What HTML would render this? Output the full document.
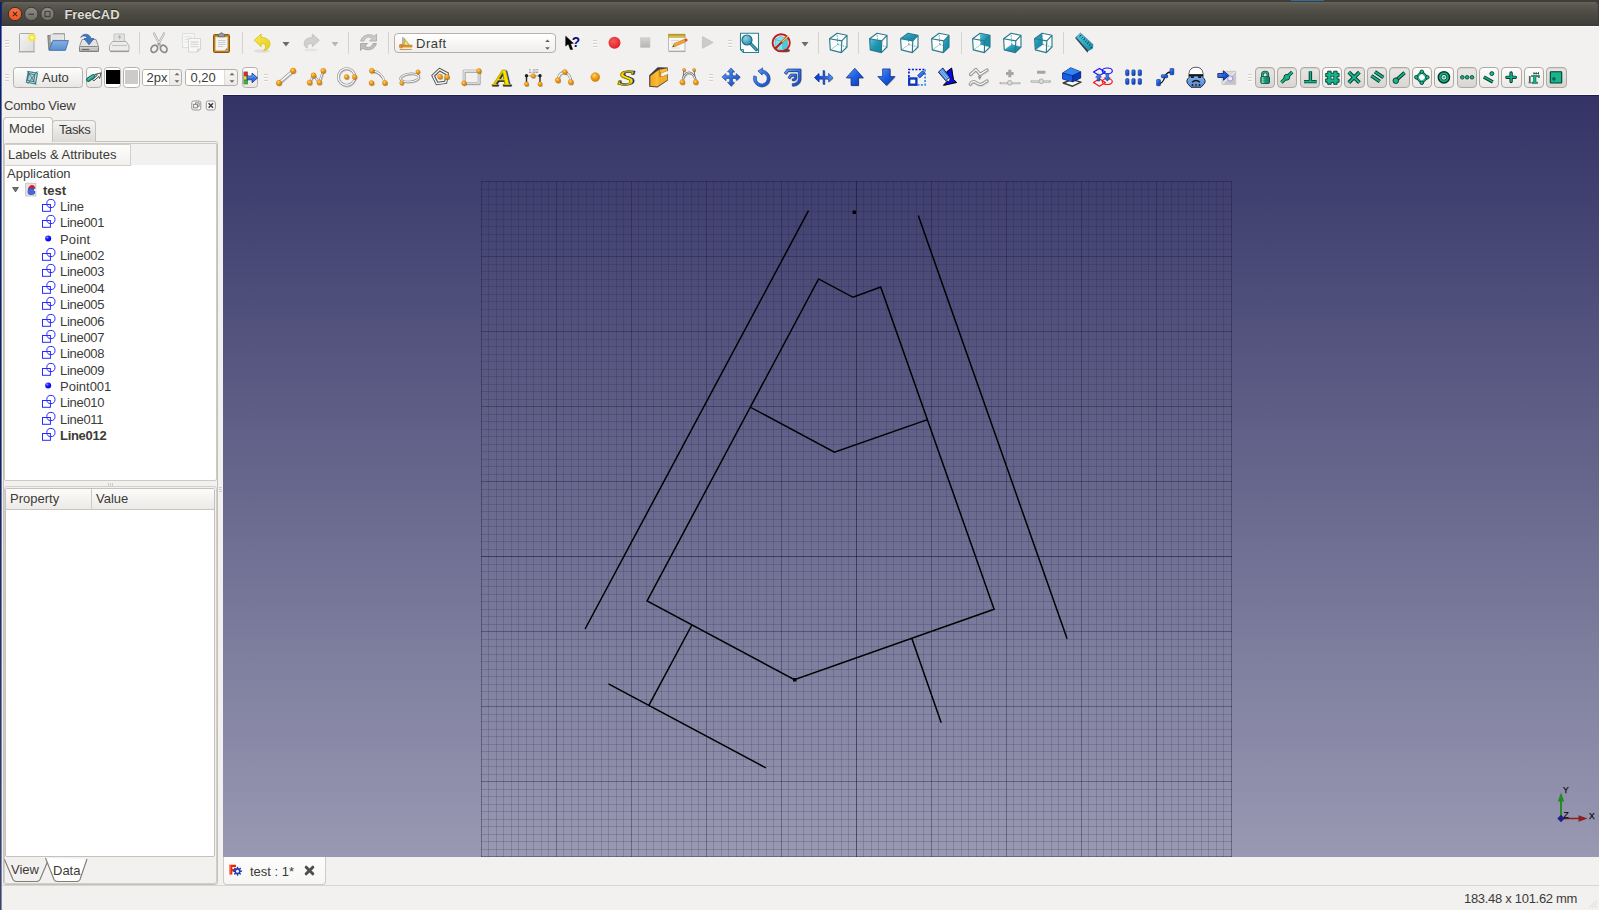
<!DOCTYPE html>
<html><head><meta charset="utf-8"><title>FreeCAD</title>
<style>
*{box-sizing:border-box}
html,body{margin:0;padding:0}
body{width:1599px;height:910px;overflow:hidden;position:relative;background:#f2f1f0;font-family:"Liberation Sans","DejaVu Sans",sans-serif;font-size:13px;color:#3c3b37}
.abs{position:absolute}
.t{position:absolute;white-space:nowrap;line-height:16px;height:16px;margin-top:1px}
svg{position:absolute;overflow:visible}
.btn{position:absolute;border:1px solid #b5b1aa;border-radius:3.500px;background:linear-gradient(#fdfdfd,#f3f2f1 50%,#e9e7e5)}
.sbtn{position:absolute;border:1px solid #aeaaa3;border-radius:4px;background:linear-gradient(#e9e7e4,#d9d6d2);box-shadow:inset 0 1px 1px rgba(0,0,0,.08)}
.sbtn.up{background:linear-gradient(#fdfdfc,#ebe9e6);box-shadow:none}
.spin{position:absolute;border:1px solid #b5b1aa;border-radius:3px;background:#fff}
.sep{position:absolute;width:1px;background:#d6d3cf}
.hd{position:absolute;width:4px;height:1px;background:#d3d0cb;box-shadow:0 1px 0 #fbfbfa}
</style></head><body>

<div class="abs" style="left:0;top:0;width:1599px;height:26px;background:#3e3d39"></div>
<div class="abs" style="left:1.500px;top:2px;width:1596.500px;height:24px;border-radius:4px 4px 0 0;background:linear-gradient(#67655b,#5a584f 12%,#4b4a43 50%,#42413c 88%,#3a3935)"></div>
<div class="abs" style="left:2px;top:26px;width:1597px;height:1px;background:#fbfbfa"></div>
<div class="abs" style="left:0;top:2px;width:1px;height:908px;background:linear-gradient(#0b1c78,#0c2468 20%,#10245f 50%,#3c4570)"></div><div class="abs" style="left:1px;top:2px;width:1px;height:908px;opacity:.6;background:linear-gradient(#0b1c78,#0c2468 20%,#10245f 50%,#3c4570)"></div>
<div class="abs" style="left:1291px;top:0;width:33px;height:1px;background:#2a7fc0;opacity:.75"></div>
<svg style="left:6px;top:5.300px" width="52" height="18" viewBox="0 0 52 18"><defs><radialGradient id="gc" cx=".5" cy=".3" r=".7"><stop offset="0" stop-color="#f5774a"/><stop offset="1" stop-color="#ea5424"/></radialGradient><linearGradient id="gg" x1="0" y1="0" x2="0" y2="1"><stop offset="0" stop-color="#8f8d86"/><stop offset="1" stop-color="#6d6b65"/></linearGradient></defs><circle cx="9" cy="9" r="6.700" fill="url(#gc)" stroke="#3a3028" stroke-width="1"/><path d="M6.900 6.900l4.200 4.200M11.100 6.900l-4.200 4.200" stroke="#5a2410" stroke-width="1.300" fill="none"/><circle cx="25.300" cy="9" r="6.700" fill="url(#gg)" stroke="#383733" stroke-width="1"/><path d="M22.600 9.300h5.400" stroke="#45443f" stroke-width="1.400"/><circle cx="41.500" cy="9" r="6.700" fill="url(#gg)" stroke="#383733" stroke-width="1"/><rect x="39" y="6.500" width="5" height="5" fill="none" stroke="#45443f" stroke-width="1.200"/></svg>
<div class="t" style="left:64.500px;top:6px;font-weight:bold;font-size:13px;color:#dfdbd2;letter-spacing:-.1px;text-shadow:0 -1px 0 rgba(0,0,0,.5)">FreeCAD</div>
<div class="abs" style="left:2px;top:27px;width:1597px;height:68px;background:#f2f1f0"></div>
<div class="hd" style="left:5px;top:40px"></div>
<div class="hd" style="left:5px;top:43px"></div>
<div class="hd" style="left:5px;top:46px"></div>
<svg style="left:15px;top:31px" width="24" height="24" viewBox="0 0 24 24"><defs><linearGradient id="nw" x1="0" y1="0" x2="1" y2="1"><stop offset="0" stop-color="#f4f4f3"/><stop offset="1" stop-color="#dcdcdb"/></linearGradient><radialGradient id="ny"><stop offset="0" stop-color="#fffde0"/><stop offset=".35" stop-color="#f5ee3c"/><stop offset="1" stop-color="#f0e62c" stop-opacity=".0"/></radialGradient></defs><rect x="3.500" y="20" width="16.500" height="1.500" fill="#9a9a98" opacity=".7"/><rect x="4.500" y="2.500" width="14.500" height="18" rx=".8" fill="url(#nw)" stroke="#a9a9a7"/><circle cx="17" cy="6.500" r="5" fill="url(#ny)"/><circle cx="17" cy="6.500" r="3.300" fill="#f2ea3a" opacity=".85"/><circle cx="17" cy="6.500" r="1.200" fill="#fffef0"/></svg>
<svg style="left:46px;top:31px" width="24" height="24" viewBox="0 0 24 24"><defs><linearGradient id="ob" x1="0" y1="0" x2="0" y2="1"><stop offset="0" stop-color="#86b0e0"/><stop offset="1" stop-color="#5a8fd0"/></linearGradient></defs><path d="M1.800 4.500h4.500l1-1.700h11.200v16H2.800z" fill="#9a9a97" stroke="#70706d" stroke-width=".8" stroke-linejoin="round"/><path d="M4.800 3.300h13.400v8H4.800z" fill="#f4f4f3" stroke="#bdbdba" stroke-width=".6"/><path d="M6 5h11M6 6.800h11M6 8.600h11" stroke="#cfcfcc" stroke-width=".8"/><path d="M6.800 9.600H22.400L19.500 19.300H3.200z" fill="url(#ob)" stroke="#3d6fb3" stroke-width=".9" stroke-linejoin="round"/></svg>
<svg style="left:77px;top:31px" width="24" height="24" viewBox="0 0 24 24"><defs><linearGradient id="sv" x1="0" y1="0" x2="0" y2="1"><stop offset="0" stop-color="#d9d9d7"/><stop offset="1" stop-color="#a5a5a2"/></linearGradient></defs><path d="M5 8.500H19L21.500 15.500V20.500H2.500V15.500z" fill="#e4e4e2" stroke="#8a8a87" stroke-width=".9" stroke-linejoin="round"/><rect x="2.500" y="15.500" width="19" height="5" rx="1" fill="url(#sv)" stroke="#7d7d7a" stroke-width=".9"/><path d="M5 18.500h7" stroke="#6a6a67" stroke-width="1.200"/><path d="M14 18.500h5.500" stroke="#c9c9c6" stroke-width="1"/><path d="M3.700 6.500C5 2.500 12.500 1.500 14 7.500H17L12 13.800 7 7.500H10C9.500 4.500 6 4.300 3.700 6.500z" fill="#3f78bd" stroke="#2c5c9b" stroke-width=".7" stroke-linejoin="round"/></svg>
<svg style="left:107px;top:31px" width="24" height="24" viewBox="0 0 24 24"><path d="M7 3h10.500v8H7z" fill="#e3e3e1" stroke="#bdbdba" stroke-width=".8"/><path d="M12.200 8.500v-2h-1.700l2-2.300 2 2.300h-1.700v2z" fill="#a9a9a6"/><path d="M5.500 10.500h13.500l3 4v4.500q0 1-1 1h-17.500q-1 0-1-1v-4.500z" fill="#ededeb" stroke="#a6a6a3" stroke-width=".9" stroke-linejoin="round"/><path d="M5 14.500h15" stroke="#c4c4c1" stroke-width="1.200"/><path d="M3 20.500h19" stroke="#9a9a97" stroke-width="1.200"/></svg>
<div class="sep" style="left:139px;top:32px;height:22px"></div>
<svg style="left:147px;top:31px" width="24" height="24" viewBox="0 0 24 24"><path d="M7 2.500L13.300 14.500M17 2.500L10.700 14.500" stroke="#a8a8a5" stroke-width="2.200" stroke-linecap="round"/><path d="M7 2.500L13.300 14.500M17 2.500L10.700 14.500" stroke="#f3f3f2" stroke-width=".9" stroke-linecap="round"/><ellipse cx="7.300" cy="17.800" rx="3" ry="3.800" transform="rotate(35 7.300 17.800)" fill="none" stroke="#8c8c89" stroke-width="1.800"/><ellipse cx="16.700" cy="17.800" rx="3" ry="3.800" transform="rotate(-35 16.700 17.800)" fill="none" stroke="#8c8c89" stroke-width="1.800"/><circle cx="12" cy="12.800" r="1" fill="#8c8c89"/></svg>
<svg style="left:179px;top:31px" width="24" height="24" viewBox="0 0 24 24"><path d="M3.500 2.500h12v14h-12z" fill="#f6f6f5" stroke="#dcdcda" stroke-width=".9"/><path d="M5.500 6h8M5.500 8.500h8M5.500 11h8" stroke="#e3e3e1" stroke-width="1"/><path d="M9.500 7.500h12v10.500l-3 3h-9z" fill="#f7f7f6" stroke="#d2d2d0" stroke-width=".9"/><path d="M11.500 11h8M11.500 13.300h8M11.500 15.600h8" stroke="#d9d9d7" stroke-width="1.300"/><path d="M18.500 21v-3h3z" fill="#e0e0de" stroke="#c8c8c6" stroke-width=".6"/></svg>
<svg style="left:210px;top:31px" width="24" height="24" viewBox="0 0 24 24"><rect x="3.500" y="3.500" width="16" height="18" rx="1.200" fill="#c17d11" stroke="#8f5902" stroke-width="1"/><path d="M5.500 6h12v13.500h-12z" fill="#f3f3f2" stroke="#d2d2cf" stroke-width=".6"/><path d="M8 9.500h7.500M8 11.500h7.500M8 13.500h7.500M8 15.500h5" stroke="#cdcdcb" stroke-width="1.200"/><path d="M14.500 19.500l3-3v3z" fill="#8b8b88"/><path d="M8.300 5.800V4q0-1 1-1h.9q.2-1.300 1.300-1.300t1.300 1.300h.9q1 0 1 1v1.800z" fill="#9b9b98" stroke="#5f5f5c" stroke-width=".8"/></svg>
<div class="sep" style="left:242px;top:32px;height:22px"></div>
<svg style="left:250px;top:31px" width="24" height="24" viewBox="0 0 24 24"><defs><linearGradient id="un" x1="0" y1="0" x2="1" y2="1"><stop offset="0" stop-color="#f7ea52"/><stop offset="1" stop-color="#e4cf1c"/></linearGradient></defs><ellipse cx="12" cy="20" rx="8" ry="1.800" fill="#000" opacity=".08"/><path d="M4.200 9.300L11.200 3V6.500C17 6.500 20.500 9.500 20 13.500 19.600 16.800 17 19 13.500 19.800 16.500 17.300 16.500 12.500 11.200 12.500V15.800z" fill="url(#un)" stroke="#d6c211" stroke-width=".8" stroke-linejoin="round"/></svg>
<svg style="left:282px;top:42px" width="8" height="5" viewBox="0 0 8 5"><path d="M0.500 0h7L4 4.500z" fill="#6b6a66"/></svg>
<svg style="left:299px;top:31px" width="24" height="24" viewBox="0 0 24 24"><ellipse cx="12" cy="19" rx="7" ry="1.500" fill="#000" opacity=".05"/><path d="M20.300 9.300L13.300 3V6.500C8 6.500 4.800 9.300 5.200 13 5.500 15.300 6.800 16.600 8.500 17 7.500 14.500 8.800 12.500 13.300 12.500V15.800z" fill="#cfcfcd" stroke="#bdbdba" stroke-width=".8" stroke-linejoin="round"/></svg>
<svg style="left:331px;top:42px" width="8" height="5" viewBox="0 0 8 5"><path d="M0.500 0h7L4 4.500z" fill="#b9b7b3"/></svg>
<div class="sep" style="left:348px;top:32px;height:22px"></div>
<svg style="left:356px;top:31px" width="24" height="24" viewBox="0 0 24 24"><path d="M20.500 3v7h-7l2.600-2.600C13.500 5 9 6 8 10H4.600C6 3.800 14 2 18.200 5.300z" fill="#c9c9c7" stroke="#a8a8a5" stroke-width=".8" stroke-linejoin="round"/><path d="M4.500 19.500v-7h7l-2.600 2.600C11.500 17.500 16 16.500 17 12.500h3.400C19 18.700 11 20.500 6.800 17.200z" fill="#bdbdbb" stroke="#a1a19e" stroke-width=".8" stroke-linejoin="round"/></svg>
<div class="sep" style="left:388px;top:32px;height:22px"></div>
<div class="btn" style="left:394px;top:32.500px;width:162px;height:20.300px;border-radius:4px;background:linear-gradient(#ffffff,#efeeec)"></div>
<svg style="left:396.500px;top:33.500px" width="19" height="19" viewBox="0 0 24 24"><path d="M7.500 4v12" stroke="#3c3b37" stroke-width=".8"/><path d="M9 5.500L16.500 15H9z" fill="#e8d44c" stroke="#a38d12" stroke-width=".8" stroke-linejoin="round"/><path d="M10.500 10v3.500h3z" fill="#f7f3c8"/><path d="M6.500 13.200H4.200q-1 0-1 1v2.300q0 1 1 1h2.300z" fill="#e9921c" stroke="#b5690b" stroke-width=".7"/><path d="M6.500 14.200H19v2.300H6.500z" fill="#f0a030" stroke="#b5690b" stroke-width=".7"/><path d="M3.500 19.500h15" stroke="#b5690b" stroke-width=".9"/></svg>
<div class="t" style="left:416px;top:35px;letter-spacing:.5px">Draft</div>
<svg style="left:544.400px;top:38px" width="7" height="13" viewBox="0 0 7 13"><path d="M1.200 4L3.500 1.600 5.800 4zM1.200 9.300L3.500 11.700 5.800 9.300z" fill="#5f5e5a"/></svg>
<svg style="left:560px;top:31px" width="24" height="24" viewBox="0 0 24 24"><path d="M5.700 5.200V15.100L8.300 12.900 10.400 18.500 12.600 18.500 10.600 12.700 13.400 12.300z" fill="#000" stroke="#000" stroke-width=".5" stroke-linejoin="round"/><text x="11.700" y="16.200" font-family="Liberation Sans, sans-serif" font-weight="bold" font-size="15.500" textLength="8.300" lengthAdjust="spacingAndGlyphs" fill="#0a0a82">?</text></svg>
<div class="hd" style="left:593px;top:40px"></div>
<div class="hd" style="left:593px;top:43px"></div>
<div class="hd" style="left:593px;top:46px"></div>
<svg style="left:602px;top:31px" width="24" height="24" viewBox="0 0 24 24"><defs><radialGradient id="rc" cx=".4" cy=".35" r=".7"><stop offset="0" stop-color="#f55a5a"/><stop offset="1" stop-color="#e01b24"/></radialGradient></defs><circle cx="12.500" cy="11.800" r="6" fill="url(#rc)"/></svg>
<svg style="left:633px;top:31px" width="24" height="24" viewBox="0 0 24 24"><defs><linearGradient id="st" x1="0" y1="0" x2="0" y2="1"><stop offset="0" stop-color="#d2d2d0"/><stop offset="1" stop-color="#b4b4b2"/></linearGradient></defs><rect x="7.300" y="6.800" width="9.700" height="9.700" fill="url(#st)" stroke="#c9c9c7" stroke-width=".6"/></svg>
<svg style="left:665px;top:31px" width="24" height="24" viewBox="0 0 24 24"><path d="M3.500 20.500h17" stroke="#a8a8a5" stroke-width="1.200"/><rect x="3.500" y="4" width="16.500" height="16" rx=".8" fill="#f7f7f6" stroke="#b3b3b0" stroke-width=".9"/><rect x="3.500" y="3.200" width="16.500" height="3" fill="#e3c24a" stroke="#b79a23" stroke-width=".7"/><path d="M5 3v2M7 3v2M9 3v2M11 3v2M13 3v2M15 3v2M17 3v2M19 3v2" stroke="#8a7412" stroke-width=".7"/><path d="M6 9.500h8M6 12h5M6 17h9" stroke="#dadad8" stroke-width="1"/><path d="M7.500 15.800L9.300 12.600 19.500 8.300 20.700 10.700 10.700 15.200z" fill="#f0a830" stroke="#b5781a" stroke-width=".6" stroke-linejoin="round"/><path d="M19.500 8.300l1.700-.7q.8-.2 1.100.6l.3.900q.2.800-.6 1.100l-1.300.5z" fill="#e04a3a"/><path d="M7.500 15.800l1-1.700 1 1.300z" fill="#3c3b37"/></svg>
<svg style="left:696px;top:31px" width="24" height="24" viewBox="0 0 24 24"><path d="M6.400 5.600L17.200 11.500 6.400 17.300z" fill="#cbcbc9" stroke="#bdbdbb" stroke-width=".7" stroke-linejoin="round"/></svg>
<div class="hd" style="left:728px;top:40px"></div>
<div class="hd" style="left:728px;top:43px"></div>
<div class="hd" style="left:728px;top:46px"></div>
<svg style="left:737px;top:31px" width="24" height="24" viewBox="0 0 24 24"><path d="M3.500 2.300H21.500V21.500H6.500L3.500 18.500z" fill="#fdfdfd" stroke="#2a7f92" stroke-width="1.100" stroke-linejoin="round"/><path d="M3.500 18.500h3v3" fill="none" stroke="#2a7f92" stroke-width=".9"/><path d="M13 12l6.400 6.600" stroke="#1f6f84" stroke-width="3.200" stroke-linecap="round"/><path d="M13.500 12.500l5.600 5.800" stroke="#4aa6bf" stroke-width="1.300" stroke-linecap="round"/><defs><radialGradient id="zf" cx=".35" cy=".3" r=".8"><stop offset="0" stop-color="#8fd6ea"/><stop offset="1" stop-color="#1f86a2"/></radialGradient></defs><circle cx="10" cy="9" r="5" fill="url(#zf)" stroke="#1f6f84" stroke-width="1.200"/></svg>
<svg style="left:769px;top:31px" width="24" height="24" viewBox="0 0 24 24"><ellipse cx="16" cy="19.500" rx="5" ry="1.800" fill="#1a1a1a" opacity=".75"/><path d="M6 8.500l4.500-3 8 1.500v9l-5 3.500-7.500-2z" fill="#7fe3ee" stroke="#3aa9b8" stroke-width=".6"/><path d="M6 8.500l7.500 2 5-3.500M13.500 10.500v9" fill="none" stroke="#3aa9b8" stroke-width=".6"/><path d="M13.500 10.500l5-3.500v9l-5 3.500z" fill="#4cc9d8"/><circle cx="12.200" cy="11.800" r="8.600" fill="none" stroke="#c21a1a" stroke-width="1.900"/><path d="M5.800 18L18.500 5.500" stroke="#c21a1a" stroke-width="1.900"/><path d="M13 11l6.500-6.300" stroke="#f2d23a" stroke-width="1.200"/></svg>
<svg style="left:801px;top:42px" width="8" height="5" viewBox="0 0 8 5"><path d="M0.500 0h7L4 4.500z" fill="#6b6a66"/></svg>
<div class="sep" style="left:818px;top:32px;height:22px"></div>
<svg style="left:826px;top:31px" width="24" height="24" viewBox="0 0 24 24"><defs><linearGradient id="cb" x1="0" y1="0" x2="1" y2="1"><stop offset="0" stop-color="#5cc4e0"/><stop offset=".5" stop-color="#1f93b0"/><stop offset="1" stop-color="#11879f"/></linearGradient></defs><path d="M3.6 7.7L11.1 2.3L21 4.3L21 16L15.3 21.6L4.3 18.9z" fill="#fbfdfd"/><path d="M11.8 13.5L11.1 2.3M11.8 13.5L4.3 18.9M11.8 13.5L21 16" stroke="#3b8797" stroke-width=".7" stroke-dasharray="1.600 1" fill="none"/><path d="M3.6 7.7L15.8 9.9L15.3 21.6L4.3 18.9zM3.6 7.7L11.1 2.3L21 4.3L15.8 9.9zM15.8 9.9L21 4.3L21 16L15.3 21.6z" fill="none" stroke="#2b7b8d" stroke-width="1.150" stroke-linejoin="round"/></svg>
<div class="sep" style="left:858px;top:32px;height:22px"></div>
<svg style="left:866px;top:31px" width="24" height="24" viewBox="0 0 24 24"><defs><linearGradient id="cb" x1="0" y1="0" x2="1" y2="1"><stop offset="0" stop-color="#5cc4e0"/><stop offset=".5" stop-color="#1f93b0"/><stop offset="1" stop-color="#11879f"/></linearGradient></defs><path d="M3.6 7.7L11.1 2.3L21 4.3L21 16L15.3 21.6L4.3 18.9z" fill="#fbfdfd"/><path d="M11.8 13.5L11.1 2.3M11.8 13.5L4.3 18.9M11.8 13.5L21 16" stroke="#3b8797" stroke-width=".7" stroke-dasharray="1.600 1" fill="none"/><path d="M3.6 7.7L15.8 9.9L15.3 21.6L4.3 18.9z" fill="url(#cb)"/><path d="M3.6 7.7L15.8 9.9L15.3 21.6L4.3 18.9zM3.6 7.7L11.1 2.3L21 4.3L15.8 9.9zM15.8 9.9L21 4.3L21 16L15.3 21.6z" fill="none" stroke="#2b7b8d" stroke-width="1.150" stroke-linejoin="round"/></svg>
<svg style="left:897px;top:31px" width="24" height="24" viewBox="0 0 24 24"><defs><linearGradient id="cb" x1="0" y1="0" x2="1" y2="1"><stop offset="0" stop-color="#5cc4e0"/><stop offset=".5" stop-color="#1f93b0"/><stop offset="1" stop-color="#11879f"/></linearGradient></defs><path d="M3.6 7.7L11.1 2.3L21 4.3L21 16L15.3 21.6L4.3 18.9z" fill="#fbfdfd"/><path d="M11.8 13.5L11.1 2.3M11.8 13.5L4.3 18.9M11.8 13.5L21 16" stroke="#3b8797" stroke-width=".7" stroke-dasharray="1.600 1" fill="none"/><path d="M3.6 7.7L11.1 2.3L21 4.3L15.8 9.9z" fill="url(#cb)"/><path d="M3.6 7.7L15.8 9.9L15.3 21.6L4.3 18.9zM3.6 7.7L11.1 2.3L21 4.3L15.8 9.9zM15.8 9.9L21 4.3L21 16L15.3 21.6z" fill="none" stroke="#2b7b8d" stroke-width="1.150" stroke-linejoin="round"/></svg>
<svg style="left:928px;top:31px" width="24" height="24" viewBox="0 0 24 24"><defs><linearGradient id="cb" x1="0" y1="0" x2="1" y2="1"><stop offset="0" stop-color="#5cc4e0"/><stop offset=".5" stop-color="#1f93b0"/><stop offset="1" stop-color="#11879f"/></linearGradient></defs><path d="M3.6 7.7L11.1 2.3L21 4.3L21 16L15.3 21.6L4.3 18.9z" fill="#fbfdfd"/><path d="M11.8 13.5L11.1 2.3M11.8 13.5L4.3 18.9M11.8 13.5L21 16" stroke="#3b8797" stroke-width=".7" stroke-dasharray="1.600 1" fill="none"/><path d="M15.8 9.9L21 4.3L21 16L15.3 21.6z" fill="url(#cb)"/><path d="M3.6 7.7L15.8 9.9L15.3 21.6L4.3 18.9zM3.6 7.7L11.1 2.3L21 4.3L15.8 9.9zM15.8 9.9L21 4.3L21 16L15.3 21.6z" fill="none" stroke="#2b7b8d" stroke-width="1.150" stroke-linejoin="round"/></svg>
<div class="sep" style="left:961px;top:32px;height:22px"></div>
<svg style="left:969px;top:31px" width="24" height="24" viewBox="0 0 24 24"><defs><linearGradient id="cb" x1="0" y1="0" x2="1" y2="1"><stop offset="0" stop-color="#5cc4e0"/><stop offset=".5" stop-color="#1f93b0"/><stop offset="1" stop-color="#11879f"/></linearGradient></defs><path d="M3.6 7.7L11.1 2.3L21 4.3L21 16L15.3 21.6L4.3 18.9z" fill="#fbfdfd"/><path d="M11.1 2.3L21 4.3L21 16L11.8 13.5z" fill="url(#cb)"/><path d="M11.8 13.5L11.1 2.3M11.8 13.5L4.3 18.9M11.8 13.5L21 16" stroke="#3b8797" stroke-width=".7" stroke-dasharray="1.600 1" fill="none"/><path d="M3.6 7.7L15.8 9.9L15.3 21.6L4.3 18.9zM3.6 7.7L11.1 2.3L21 4.3L15.8 9.9zM15.8 9.9L21 4.3L21 16L15.3 21.6z" fill="none" stroke="#2b7b8d" stroke-width="1.150" stroke-linejoin="round"/></svg>
<svg style="left:1000px;top:31px" width="24" height="24" viewBox="0 0 24 24"><defs><linearGradient id="cb" x1="0" y1="0" x2="1" y2="1"><stop offset="0" stop-color="#5cc4e0"/><stop offset=".5" stop-color="#1f93b0"/><stop offset="1" stop-color="#11879f"/></linearGradient></defs><path d="M3.6 7.7L11.1 2.3L21 4.3L21 16L15.3 21.6L4.3 18.9z" fill="#fbfdfd"/><path d="M4.3 18.9L15.3 21.6L21 16L11.8 13.5z" fill="url(#cb)"/><path d="M11.8 13.5L11.1 2.3M11.8 13.5L4.3 18.9M11.8 13.5L21 16" stroke="#3b8797" stroke-width=".7" stroke-dasharray="1.600 1" fill="none"/><path d="M3.6 7.7L15.8 9.9L15.3 21.6L4.3 18.9zM3.6 7.7L11.1 2.3L21 4.3L15.8 9.9zM15.8 9.9L21 4.3L21 16L15.3 21.6z" fill="none" stroke="#2b7b8d" stroke-width="1.150" stroke-linejoin="round"/></svg>
<svg style="left:1031px;top:31px" width="24" height="24" viewBox="0 0 24 24"><defs><linearGradient id="cb" x1="0" y1="0" x2="1" y2="1"><stop offset="0" stop-color="#5cc4e0"/><stop offset=".5" stop-color="#1f93b0"/><stop offset="1" stop-color="#11879f"/></linearGradient></defs><path d="M3.6 7.7L11.1 2.3L21 4.3L21 16L15.3 21.6L4.3 18.9z" fill="#fbfdfd"/><path d="M3.6 7.7L11.1 2.3L11.8 13.5L4.3 18.9z" fill="url(#cb)"/><path d="M11.8 13.5L11.1 2.3M11.8 13.5L4.3 18.9M11.8 13.5L21 16" stroke="#3b8797" stroke-width=".7" stroke-dasharray="1.600 1" fill="none"/><path d="M3.6 7.7L15.8 9.9L15.3 21.6L4.3 18.9zM3.6 7.7L11.1 2.3L21 4.3L15.8 9.9zM15.8 9.9L21 4.3L21 16L15.3 21.6z" fill="none" stroke="#2b7b8d" stroke-width="1.150" stroke-linejoin="round"/></svg>
<div class="sep" style="left:1063px;top:32px;height:22px"></div>
<svg style="left:1071px;top:31px" width="24" height="24" viewBox="0 0 24 24"><path d="M4.200 7L16.500 21.800 17.500 18.500 5.500 5.500z" fill="#3a3a3a"/><defs><linearGradient id="ms" x1="0" y1="0" x2="1" y2="1"><stop offset="0" stop-color="#5cc9e6"/><stop offset="1" stop-color="#128aa6"/></linearGradient></defs><path d="M9.500 2L22 13.400 21.500 17.500 17.200 19.800 5 6.300z" fill="url(#ms)" stroke="#0f6c82" stroke-width=".5" stroke-linejoin="round"/><path d="M8.500 5.500l1.800-1.500M10.500 7.300l1.200-1M12.300 9l1.800-1.500M14.200 10.800l1.200-1M16 12.600l1.800-1.500M18 14.500l1.200-1M19.600 17l1.500-1.200" stroke="#04303a" stroke-width="1"/></svg>
<div class="hd" style="left:5px;top:74px"></div>
<div class="hd" style="left:5px;top:77px"></div>
<div class="hd" style="left:5px;top:80px"></div>
<div class="btn" style="left:12.500px;top:67.300px;width:70.500px;height:20.400px"></div>
<svg style="left:22px;top:68px" width="19" height="19" viewBox="0 0 24 24"><path d="M8 4.500L19.500 6.500 17 20 5.500 18z" fill="#d7eef2" stroke="#2a8f9f" stroke-width="1.600" stroke-linejoin="round"/><path d="M8.500 7l8 1.300-1.700 9-8-1.400z" fill="#9bd6de" stroke="#3b3b3b" stroke-width=".9"/><path d="M6.500 3.500L18 21M19.500 4L7 20" stroke="#4a4a48" stroke-width=".8"/></svg>
<div class="t" style="left:42px;top:69px">Auto</div>
<div class="btn" style="left:85.600px;top:67.300px;width:16.400px;height:20.400px"></div>
<svg style="left:85px;top:68px" width="18" height="18" viewBox="0 0 24 24"><path d="M4.500 15.500L11 11" stroke="#0e5f55" stroke-width="6" stroke-linecap="round"/><path d="M4.500 15.500L11 11" stroke="#25a596" stroke-width="3.600" stroke-linecap="round"/><path d="M4.300 14.800L10.500 10.500" stroke="#7fd6cb" stroke-width="1" stroke-linecap="round"/><path d="M10 15.500L16.500 9.500 13.500 8.500 21.500 6.500 19.500 14 18.300 11.500 12 17z" fill="#f3f3f1" stroke="#3a4a48" stroke-width="1.300" stroke-linejoin="round"/></svg>
<div class="btn" style="left:104.400px;top:67.300px;width:16.600px;height:20.400px;background:#fff"></div><div class="abs" style="left:106px;top:70.300px;width:14px;height:13.700px;background:#000"></div>
<div class="btn" style="left:123.400px;top:67.300px;width:16.200px;height:20.400px;background:#fff"></div><div class="abs" style="left:125.200px;top:70.300px;width:13px;height:13.700px;background:#cbcbcb"></div>
<div class="spin" style="left:142.4px;top:69px;width:39.900000000000006px;height:16.500px;background:linear-gradient(#f7f6f5,#eceae8)"></div>
<div class="abs" style="left:143.4px;top:70px;width:26.299999999999983px;height:14.500px;background:#fff;border-radius:2px 0 0 2px;border-right:1px solid #dedbd7"></div>
<div class="t" style="left:146.5px;top:69px">2px</div>
<svg style="left:173.5px;top:72px" width="6" height="12" viewBox="0 0 6 12"><path d="M0.500 3.200L3 .7 5.500 3.200zM0.500 8.300L3 10.800 5.500 8.300z" fill="#6b6a66"/></svg>
<div class="spin" style="left:185.3px;top:69px;width:52.89999999999998px;height:16.500px;background:linear-gradient(#f7f6f5,#eceae8)"></div>
<div class="abs" style="left:186.3px;top:70px;width:39.099999999999994px;height:14.500px;background:#fff;border-radius:2px 0 0 2px;border-right:1px solid #dedbd7"></div>
<div class="t" style="left:190.5px;top:69px">0,20</div>
<svg style="left:229.3px;top:72px" width="6" height="12" viewBox="0 0 6 12"><path d="M0.500 3.200L3 .7 5.500 3.200zM0.500 8.300L3 10.800 5.500 8.300z" fill="#6b6a66"/></svg>
<div class="btn" style="left:241.500px;top:67.300px;width:16.500px;height:20.400px"></div>
<svg style="left:241px;top:68.500px" width="17" height="17" viewBox="2 2 20 20"><rect x="5" y="5" width="5" height="15" fill="#55534f"/><rect x="5.600" y="5.600" width="3.800" height="4" fill="#f02020"/><rect x="5.600" y="10.500" width="3.800" height="4" fill="#f0e020"/><rect x="5.600" y="15.400" width="3.800" height="4" fill="#28c428"/><path d="M9 10.300h6V6.800L21.500 12.500 15 18.200v-3.500H9z" fill="#2d6fe0" stroke="#12357f" stroke-width=".9" stroke-linejoin="round"/><path d="M10 11.400h6V9.300l3.500 3.200" fill="none" stroke="#8ab4f5" stroke-width=".9"/></svg>
<div class="hd" style="left:264px;top:74px"></div>
<div class="hd" style="left:264px;top:77px"></div>
<div class="hd" style="left:264px;top:80px"></div>
<svg style="left:274px;top:65px" width="24" height="24" viewBox="0 0 24 24"><defs><radialGradient id="od" cx=".38" cy=".32" r=".75"><stop offset="0" stop-color="#ffd27a"/><stop offset=".45" stop-color="#f7a010"/><stop offset="1" stop-color="#d07a00"/></radialGradient></defs><path d="M4.900 17.900L19.100 5.700" transform="translate(.6 .9)" fill="none" stroke="#000" stroke-opacity=".22" stroke-width="3" stroke-linecap="round" stroke-linejoin="round"/><path d="M4.900 17.900L19.100 5.700" fill="none" stroke="#8a8a8d" stroke-width="3" stroke-linecap="round" stroke-linejoin="round"/><path d="M4.900 17.900L19.100 5.700" fill="none" stroke="#f6f6f6" stroke-width="1.9" stroke-linecap="round" stroke-linejoin="round"/><circle cx="5.6000000000000005" cy="18.799999999999997" r="2.7" fill="#000" opacity=".28"/><circle cx="4.9" cy="17.9" r="2.7" fill="url(#od)" stroke="#c77800" stroke-width=".4"/><circle cx="19.8" cy="6.6000000000000005" r="2.7" fill="#000" opacity=".28"/><circle cx="19.1" cy="5.7" r="2.7" fill="url(#od)" stroke="#c77800" stroke-width=".4"/></svg>
<svg style="left:305px;top:65px" width="24" height="24" viewBox="0 0 24 24"><defs><radialGradient id="od" cx=".38" cy=".32" r=".75"><stop offset="0" stop-color="#ffd27a"/><stop offset=".45" stop-color="#f7a010"/><stop offset="1" stop-color="#d07a00"/></radialGradient></defs><path d="M4.600 17.600L8.500 10.300 14.300 17.400 18.200 5.700" transform="translate(.6 .9)" fill="none" stroke="#000" stroke-opacity=".22" stroke-width="2.2" stroke-linecap="round" stroke-linejoin="round"/><path d="M4.600 17.600L8.500 10.300 14.300 17.400 18.200 5.700" fill="none" stroke="#8a8a8d" stroke-width="2.2" stroke-linecap="round" stroke-linejoin="round"/><path d="M4.600 17.600L8.500 10.300 14.300 17.400 18.200 5.700" fill="none" stroke="#f6f6f6" stroke-width="1.1" stroke-linecap="round" stroke-linejoin="round"/><circle cx="5.3" cy="18.5" r="2.5" fill="#000" opacity=".28"/><circle cx="4.6" cy="17.6" r="2.5" fill="url(#od)" stroke="#c77800" stroke-width=".4"/><circle cx="9.2" cy="11.200000000000001" r="2.5" fill="#000" opacity=".28"/><circle cx="8.5" cy="10.3" r="2.5" fill="url(#od)" stroke="#c77800" stroke-width=".4"/><circle cx="15.0" cy="18.299999999999997" r="2.5" fill="#000" opacity=".28"/><circle cx="14.3" cy="17.4" r="2.5" fill="url(#od)" stroke="#c77800" stroke-width=".4"/><circle cx="18.9" cy="6.6000000000000005" r="2.5" fill="#000" opacity=".28"/><circle cx="18.2" cy="5.7" r="2.5" fill="url(#od)" stroke="#c77800" stroke-width=".4"/></svg>
<svg style="left:336px;top:65px" width="24" height="24" viewBox="0 0 24 24"><defs><radialGradient id="od" cx=".38" cy=".32" r=".75"><stop offset="0" stop-color="#ffd27a"/><stop offset=".45" stop-color="#f7a010"/><stop offset="1" stop-color="#d07a00"/></radialGradient></defs><circle cx="11.200" cy="12.800" r="8.300" fill="none" stroke="#000" stroke-opacity=".2" stroke-width="2.600"/><circle cx="10.600" cy="11.900" r="8.300" fill="none" stroke="#8a8a8d" stroke-width="2.600"/><circle cx="10.600" cy="11.900" r="8.300" fill="none" stroke="#f6f6f6" stroke-width="1.500"/><circle cx="11.299999999999999" cy="12.8" r="2.4" fill="#000" opacity=".28"/><circle cx="10.6" cy="11.9" r="2.4" fill="url(#od)" stroke="#c77800" stroke-width=".4"/><circle cx="19.3" cy="12.8" r="2.4" fill="#000" opacity=".28"/><circle cx="18.6" cy="11.9" r="2.4" fill="url(#od)" stroke="#c77800" stroke-width=".4"/></svg>
<svg style="left:366px;top:65px" width="24" height="24" viewBox="0 0 24 24"><defs><radialGradient id="od" cx=".38" cy=".32" r=".75"><stop offset="0" stop-color="#ffd27a"/><stop offset=".45" stop-color="#f7a010"/><stop offset="1" stop-color="#d07a00"/></radialGradient></defs><path d="M5.800 5.700Q16.500 7 18.900 17.900" transform="translate(.6 .9)" fill="none" stroke="#000" stroke-opacity=".22" stroke-width="2.4" stroke-linecap="round" stroke-linejoin="round"/><path d="M5.800 5.700Q16.500 7 18.900 17.900" fill="none" stroke="#8a8a8d" stroke-width="2.4" stroke-linecap="round" stroke-linejoin="round"/><path d="M5.800 5.700Q16.500 7 18.900 17.900" fill="none" stroke="#f6f6f6" stroke-width="1.2999999999999998" stroke-linecap="round" stroke-linejoin="round"/><circle cx="6.5" cy="6.6000000000000005" r="2.5" fill="#000" opacity=".28"/><circle cx="5.8" cy="5.7" r="2.5" fill="url(#od)" stroke="#c77800" stroke-width=".4"/><circle cx="6.2" cy="18.799999999999997" r="2.5" fill="#000" opacity=".28"/><circle cx="5.5" cy="17.9" r="2.5" fill="url(#od)" stroke="#c77800" stroke-width=".4"/><circle cx="19.599999999999998" cy="18.799999999999997" r="2.5" fill="#000" opacity=".28"/><circle cx="18.9" cy="17.9" r="2.5" fill="url(#od)" stroke="#c77800" stroke-width=".4"/></svg>
<svg style="left:398px;top:65px" width="24" height="24" viewBox="0 0 24 24"><defs><radialGradient id="od" cx=".38" cy=".32" r=".75"><stop offset="0" stop-color="#ffd27a"/><stop offset=".45" stop-color="#f7a010"/><stop offset="1" stop-color="#d07a00"/></radialGradient></defs><g transform="rotate(-6 11.700 12.800)"><ellipse cx="12.200" cy="13.600" rx="9.300" ry="4" fill="none" stroke="#000" stroke-opacity=".2" stroke-width="2.200"/><ellipse cx="11.700" cy="12.800" rx="9.300" ry="4" fill="none" stroke="#8a8a8d" stroke-width="2.200"/><ellipse cx="11.700" cy="12.800" rx="9.300" ry="4" fill="none" stroke="#f6f6f6" stroke-width="1.100"/></g><circle cx="20.599999999999998" cy="7.800000000000001" r="2.1" fill="#000" opacity=".28"/><circle cx="19.9" cy="6.9" r="2.1" fill="url(#od)" stroke="#c77800" stroke-width=".4"/><circle cx="4.4" cy="18.9" r="2.1" fill="#000" opacity=".28"/><circle cx="3.7" cy="18" r="2.1" fill="url(#od)" stroke="#c77800" stroke-width=".4"/></svg>
<svg style="left:429px;top:65px" width="24" height="24" viewBox="0 0 24 24"><defs><radialGradient id="od" cx=".38" cy=".32" r=".75"><stop offset="0" stop-color="#ffd27a"/><stop offset=".45" stop-color="#f7a010"/><stop offset="1" stop-color="#d07a00"/></radialGradient></defs><path d="M10.3 3.3L19.4 8.1L17.6 18.3L7.4 19.8L2.8 10.5z" fill="none" stroke="#55555a" stroke-width="1.100" stroke-linejoin="round"/><path d="M10.5 4.7L18.2 8.8L16.6 17.3L8.0 18.5L4.2 10.7z" fill="none" stroke="#f4f4f4" stroke-width="1.300" stroke-linejoin="round"/><path d="M10.7 6.1L16.9 9.4L15.7 16.3L8.7 17.3L5.6 11.0z" fill="none" stroke="#55555a" stroke-width="1.100" stroke-linejoin="round"/><circle cx="11.7" cy="12.5" r="2.5" fill="#000" opacity=".28"/><circle cx="11" cy="11.6" r="2.5" fill="url(#od)" stroke="#c77800" stroke-width=".4"/><circle cx="18.7" cy="12.8" r="2.5" fill="#000" opacity=".28"/><circle cx="18" cy="11.9" r="2.5" fill="url(#od)" stroke="#c77800" stroke-width=".4"/></svg>
<svg style="left:460px;top:65px" width="24" height="24" viewBox="0 0 24 24"><defs><radialGradient id="od" cx=".38" cy=".32" r=".75"><stop offset="0" stop-color="#ffd27a"/><stop offset=".45" stop-color="#f7a010"/><stop offset="1" stop-color="#d07a00"/></radialGradient></defs><path d="M4 6H19V18.200H4z" transform="translate(.6 .9)" fill="none" stroke="#000" stroke-opacity=".22" stroke-width="2.4" stroke-linecap="round" stroke-linejoin="round"/><path d="M4 6H19V18.200H4z" fill="none" stroke="#8a8a8d" stroke-width="2.4" stroke-linecap="round" stroke-linejoin="round"/><path d="M4 6H19V18.200H4z" fill="none" stroke="#f6f6f6" stroke-width="1.2999999999999998" stroke-linecap="round" stroke-linejoin="round"/><circle cx="19.7" cy="6.9" r="2.4" fill="#000" opacity=".28"/><circle cx="19" cy="6" r="2.4" fill="url(#od)" stroke="#c77800" stroke-width=".4"/><circle cx="4.7" cy="19.099999999999998" r="2.4" fill="#000" opacity=".28"/><circle cx="4" cy="18.2" r="2.4" fill="url(#od)" stroke="#c77800" stroke-width=".4"/></svg>
<svg style="left:491px;top:65px" width="24" height="24" viewBox="0 0 24 24"><text x="2.6" y="20" font-family="Liberation Serif, serif" font-weight="bold" font-style="italic" font-size="22.5" textLength="18" lengthAdjust="spacingAndGlyphs" fill="#20202a" stroke="#20202a" stroke-width="1.200" transform="translate(.7 .8)">A</text><text x="2.6" y="20" font-family="Liberation Serif, serif" font-weight="bold" font-style="italic" font-size="22.5" textLength="18" lengthAdjust="spacingAndGlyphs" fill="#f7e600" stroke="#8a7a00" stroke-width=".45">A</text></svg>
<svg style="left:522px;top:65px" width="24" height="24" viewBox="0 0 24 24"><defs><radialGradient id="od" cx=".38" cy=".32" r=".75"><stop offset="0" stop-color="#ffd27a"/><stop offset=".45" stop-color="#f7a010"/><stop offset="1" stop-color="#d07a00"/></radialGradient></defs><text x="6.500" y="8" font-family="Liberation Sans, sans-serif" font-size="5" fill="#77777a">1.02</text><path d="M4.500 10.800H18" stroke="#bdbdbd" stroke-width="1.400"/><path d="M4.500 10.800V19M18 10.800V19" stroke="#2a2a2a" stroke-width="1.400"/><circle cx="4.500" cy="10.800" r="1.700" fill="#1e1e1e"/><circle cx="18" cy="10.800" r="1.700" fill="#1e1e1e"/><circle cx="11.799999999999999" cy="11.700000000000001" r="2.2" fill="#000" opacity=".28"/><circle cx="11.1" cy="10.8" r="2.2" fill="url(#od)" stroke="#c77800" stroke-width=".4"/><circle cx="5.2" cy="19.9" r="2.2" fill="#000" opacity=".28"/><circle cx="4.5" cy="19" r="2.2" fill="url(#od)" stroke="#c77800" stroke-width=".4"/><circle cx="18.7" cy="19.9" r="2.2" fill="#000" opacity=".28"/><circle cx="18" cy="19" r="2.2" fill="url(#od)" stroke="#c77800" stroke-width=".4"/></svg>
<svg style="left:553px;top:65px" width="24" height="24" viewBox="0 0 24 24"><defs><radialGradient id="od" cx=".38" cy=".32" r=".75"><stop offset="0" stop-color="#ffd27a"/><stop offset=".45" stop-color="#f7a010"/><stop offset="1" stop-color="#d07a00"/></radialGradient></defs><path d="M4.900 15.200C5.500 4.500 17.500 4.500 17.800 17" transform="translate(.6 .9)" fill="none" stroke="#000" stroke-opacity=".22" stroke-width="2.6" stroke-linecap="round" stroke-linejoin="round"/><path d="M4.900 15.200C5.500 4.500 17.500 4.500 17.800 17" fill="none" stroke="#8a8a8d" stroke-width="2.6" stroke-linecap="round" stroke-linejoin="round"/><path d="M4.900 15.200C5.500 4.500 17.500 4.500 17.800 17" fill="none" stroke="#f6f6f6" stroke-width="1.5" stroke-linecap="round" stroke-linejoin="round"/><circle cx="5.6000000000000005" cy="16.099999999999998" r="2.6" fill="#000" opacity=".28"/><circle cx="4.9" cy="15.2" r="2.6" fill="url(#od)" stroke="#c77800" stroke-width=".4"/><circle cx="12.5" cy="7.800000000000001" r="2.4" fill="#000" opacity=".28"/><circle cx="11.8" cy="6.9" r="2.4" fill="url(#od)" stroke="#c77800" stroke-width=".4"/><circle cx="18.5" cy="17.9" r="2.6" fill="#000" opacity=".28"/><circle cx="17.8" cy="17" r="2.6" fill="url(#od)" stroke="#c77800" stroke-width=".4"/></svg>
<svg style="left:584px;top:65px" width="24" height="24" viewBox="0 0 24 24"><defs><radialGradient id="od" cx=".38" cy=".32" r=".75"><stop offset="0" stop-color="#ffd27a"/><stop offset=".45" stop-color="#f7a010"/><stop offset="1" stop-color="#d07a00"/></radialGradient></defs><circle cx="11.300" cy="12.100" r="4.400" fill="url(#od)" stroke="#c77800" stroke-width=".5"/></svg>
<svg style="left:615px;top:65px" width="24" height="24" viewBox="0 0 24 24"><text x="2.6" y="19.5" font-family="Liberation Serif, serif" font-weight="normal" font-style="italic" font-size="21.5" textLength="16.5" lengthAdjust="spacingAndGlyphs" fill="#20202a" stroke="#20202a" stroke-width="1.200" transform="translate(.7 .8)">S</text><text x="2.6" y="19.5" font-family="Liberation Serif, serif" font-weight="normal" font-style="italic" font-size="21.5" textLength="16.5" lengthAdjust="spacingAndGlyphs" fill="#f7e600" stroke="#8a7a00" stroke-width=".45">S</text></svg>
<svg style="left:646px;top:65px" width="24" height="24" viewBox="0 0 24 24"><defs><linearGradient id="fb" x1="0" y1="0" x2="1" y2="0"><stop offset="0" stop-color="#f9a21a"/><stop offset="1" stop-color="#fcc23c"/></linearGradient></defs><path d="M3.200 10.200L11.700 2.300 21.800 2.600V6.100L15.600 8.800V11.400L21.800 9V15.400L11.300 22.500 3.200 21.700z" fill="#3b3b40"/><path d="M4.300 10.900L12.900 4.700V20.500L11 21.500 4.300 20.900z" fill="url(#fb)"/><path d="M12.900 4.700L21.300 3.300V5.700L15.100 8.400z" fill="#fdb92e"/><path d="M12.900 4.700L15.100 8.400V11.800L12.900 11z" fill="#e08a0a"/><path d="M15.100 11.900L21.300 9.600V15L12.900 20.500V11z" fill="#f7ac20"/><path d="M15.100 11.900V8.400" stroke="#fff" stroke-width="0"/><path d="M15.100 8.500L21.300 5.900V9.300L15.100 11.700z" fill="#f4f4f2"/></svg>
<svg style="left:677px;top:65px" width="24" height="24" viewBox="0 0 24 24"><defs><radialGradient id="od" cx=".38" cy=".32" r=".75"><stop offset="0" stop-color="#ffd27a"/><stop offset=".45" stop-color="#f7a010"/><stop offset="1" stop-color="#d07a00"/></radialGradient></defs><path d="M7 4.800L5.500 16M17 4.800L18.500 16" stroke="#3a3a3e" stroke-width=".7"/><path d="M5.300 17.200C6.500 4.500 17.500 4.500 18.700 17.200" transform="translate(.6 .9)" fill="none" stroke="#000" stroke-opacity=".25" stroke-width="2.2" stroke-linecap="round" stroke-linejoin="round"/><path d="M5.300 17.200C6.500 4.500 17.500 4.500 18.700 17.200" fill="none" stroke="#77777a" stroke-width="2.2" stroke-linecap="round" stroke-linejoin="round"/><path d="M5.300 17.200C6.500 4.500 17.500 4.500 18.700 17.200" fill="none" stroke="#f2f2f2" stroke-width="0.9000000000000001" stroke-linecap="round" stroke-linejoin="round"/><circle cx="7.7" cy="5.7" r="1.5" fill="#000" opacity=".28"/><circle cx="7" cy="4.8" r="1.5" fill="url(#od)" stroke="#c77800" stroke-width=".4"/><circle cx="17.7" cy="5.7" r="1.5" fill="#000" opacity=".28"/><circle cx="17" cy="4.8" r="1.5" fill="url(#od)" stroke="#c77800" stroke-width=".4"/><circle cx="6.0" cy="18.099999999999998" r="2.5" fill="#000" opacity=".28"/><circle cx="5.3" cy="17.2" r="2.5" fill="url(#od)" stroke="#c77800" stroke-width=".4"/><circle cx="19.4" cy="18.099999999999998" r="2.5" fill="#000" opacity=".28"/><circle cx="18.7" cy="17.2" r="2.5" fill="url(#od)" stroke="#c77800" stroke-width=".4"/></svg>
<div class="hd" style="left:709px;top:74px"></div>
<div class="hd" style="left:709px;top:77px"></div>
<div class="hd" style="left:709px;top:80px"></div>
<svg style="left:719px;top:65px" width="24" height="24" viewBox="0 0 24 24"><defs><linearGradient id="bl2" x1="0" y1="0" x2="1" y2="1"><stop offset="0" stop-color="#6aa6f7"/><stop offset=".55" stop-color="#2d6fe2"/><stop offset="1" stop-color="#1447c0"/></linearGradient></defs><path d="M10.75 6.80L8.50 6.80L12.00 2.90L15.50 6.80L13.25 6.80L13.25 10.75L17.20 10.75L17.20 8.50L21.10 12.00L17.20 15.50L17.20 13.25L13.25 13.25L13.25 17.20L15.50 17.20L12.00 21.10L8.50 17.20L10.75 17.20L10.75 13.25L6.80 13.25L6.80 15.50L2.90 12.00L6.80 8.50L6.80 10.75L10.75 10.75z" transform="translate(.6 .8)" fill="#000" opacity=".4"/><path d="M10.75 6.80L8.50 6.80L12.00 2.90L15.50 6.80L13.25 6.80L13.25 10.75L17.20 10.75L17.20 8.50L21.10 12.00L17.20 15.50L17.20 13.25L13.25 13.25L13.25 17.20L15.50 17.20L12.00 21.10L8.50 17.20L10.75 17.20L10.75 13.25L6.80 13.25L6.80 15.50L2.90 12.00L6.80 8.50L6.80 10.75L10.75 10.75z" fill="url(#bl2)" stroke="#1a3fa0" stroke-width=".6" stroke-linejoin="round"/></svg>
<svg style="left:750px;top:65px" width="24" height="24" viewBox="0 0 24 24"><defs><linearGradient id="bl2" x1="0" y1="0" x2="1" y2="1"><stop offset="0" stop-color="#6aa6f7"/><stop offset=".55" stop-color="#2d6fe2"/><stop offset="1" stop-color="#1447c0"/></linearGradient></defs><path d="M12.28 5.12A8.3 8.3 0 1 1 3.81 10.84L6.47 11.70A5.5 5.5 0 1 0 12.08 7.91L12.06 10.02L7.90 6.00L12.81 2.86z" transform="translate(.6 .8)" fill="#000" opacity=".4"/><path d="M12.28 5.12A8.3 8.3 0 1 1 3.81 10.84L6.47 11.70A5.5 5.5 0 1 0 12.08 7.91L12.06 10.02L7.90 6.00L12.81 2.86z" fill="url(#bl2)" stroke="#1a3fa0" stroke-width=".6" stroke-linejoin="round"/></svg>
<svg style="left:781px;top:65px" width="24" height="24" viewBox="0 0 24 24"><defs><linearGradient id="bl2" x1="0" y1="0" x2="1" y2="1"><stop offset="0" stop-color="#6aa6f7"/><stop offset=".55" stop-color="#2d6fe2"/><stop offset="1" stop-color="#1447c0"/></linearGradient></defs><path d="M3.200 7.900L6.300 4H19.900V13.500C19.900 18 16.500 20.700 11.400 21.100L11.200 18.800C15 18.400 17.300 16.500 17.300 13.500V6.500H7.300L5.200 9.300zM7 12.600L9.400 9H15.600V13C15.600 14.700 14 15.500 11.400 15.800L11.200 13.900C12.700 13.700 13.400 13.400 13.400 12.700V11.200H10.400L8.800 13.700z" transform="translate(.6 .8)" fill="#000" opacity=".4"/><path d="M3.200 7.900L6.300 4H19.900V13.500C19.900 18 16.500 20.700 11.400 21.100L11.200 18.800C15 18.400 17.300 16.500 17.300 13.500V6.500H7.300L5.200 9.300z" fill="url(#bl2)" stroke="#12328c" stroke-width=".7" stroke-linejoin="round"/><path d="M7 12.600L9.400 9H15.600V13C15.600 14.700 14 15.500 11.400 15.800L11.200 13.900C12.700 13.700 13.400 13.400 13.400 12.700V11.200H10.400L8.800 13.700z" fill="url(#bl2)" stroke="#12328c" stroke-width=".7" stroke-linejoin="round"/></svg>
<svg style="left:812px;top:65px" width="24" height="24" viewBox="0 0 24 24"><defs><linearGradient id="bl2" x1="0" y1="0" x2="1" y2="1"><stop offset="0" stop-color="#6aa6f7"/><stop offset=".55" stop-color="#2d6fe2"/><stop offset="1" stop-color="#1447c0"/></linearGradient></defs><defs><linearGradient id="tx" x1="0" y1="0" x2="1" y2="0"><stop offset="0" stop-color="#0a36c8"/><stop offset=".5" stop-color="#1f5fe0"/><stop offset="1" stop-color="#4f97f5"/></linearGradient></defs><path d="M2.400 12.600L7 8.300V11.300H11V5.600H12.600V11.300H16.500V8.300L21 12.600 16.500 16.900V13.900H12.600V19.200H11V13.900H7V16.900z" transform="translate(.6 .8)" fill="#000" opacity=".4"/><path d="M2.400 12.600L7 8.300V11.300H11V5.600H12.600V11.300H16.500V8.300L21 12.600 16.500 16.900V13.900H12.600V19.200H11V13.900H7V16.900z" fill="url(#tx)" stroke="#0b2a8a" stroke-width=".5" stroke-linejoin="round"/></svg>
<svg style="left:843px;top:65px" width="24" height="24" viewBox="0 0 24 24"><defs><linearGradient id="bl" x1="0" y1="0" x2="1" y2="1"><stop offset="0" stop-color="#5b9cf5"/><stop offset=".5" stop-color="#1c5fe0"/><stop offset="1" stop-color="#0a36b8"/></linearGradient></defs><path d="M11.800 3.200L20.300 12.800H15.500V20.400H8V12.800H3.200z" transform="translate(.7 .8)" fill="#000" opacity=".35"/><path d="M11.800 3.200L20.300 12.800H15.500V20.400H8V12.800H3.200z" fill="url(#bl)" stroke="#0b2a8a" stroke-width=".7" stroke-linejoin="round" /></svg>
<svg style="left:874px;top:65px" width="24" height="24" viewBox="0 0 24 24"><defs><linearGradient id="bl" x1="0" y1="0" x2="1" y2="1"><stop offset="0" stop-color="#5b9cf5"/><stop offset=".5" stop-color="#1c5fe0"/><stop offset="1" stop-color="#0a36b8"/></linearGradient></defs><path d="M8.600 3.900H16.100V11.500H21L12.400 20.400 3.800 11.500H8.600z" transform="translate(.7 .8)" fill="#000" opacity=".35"/><path d="M8.600 3.900H16.100V11.500H21L12.400 20.400 3.800 11.500H8.600z" fill="url(#bl)" stroke="#0b2a8a" stroke-width=".7" stroke-linejoin="round" /></svg>
<svg style="left:905px;top:65px" width="24" height="24" viewBox="0 0 24 24"><defs><linearGradient id="bl2" x1="0" y1="0" x2="1" y2="1"><stop offset="0" stop-color="#6aa6f7"/><stop offset=".55" stop-color="#2d6fe2"/><stop offset="1" stop-color="#1447c0"/></linearGradient></defs><path d="M3.900 12V4.500H20.100" fill="none" stroke="#0a14e0" stroke-width="1.700" stroke-dasharray="2 1.500"/><path d="M20.100 4.500V19.800H12.500" fill="none" stroke="#2a8cff" stroke-width="1.700" stroke-dasharray="2 1.500"/><rect x="4.200" y="13.500" width="7.200" height="6.200" fill="#fbfbfa" stroke="#0a32b4" stroke-width="2.300"/><path d="M3.300 12.700h8.800" stroke="#2d6fe2" stroke-width=".8"/><path d="M12.500 10.500L17 6.300Q18.500 5.500 19.300 6.800T18.800 9.200L14.800 13z" fill="url(#bl2)" stroke="#0b2a8a" stroke-width=".7" stroke-linejoin="round"/></svg>
<svg style="left:936px;top:65px" width="24" height="24" viewBox="0 0 24 24"><path d="M10.600 6.800L15.600 3 17.400 14.300 20.600 17.400 7.400 20.300 12.400 14.900z" transform="translate(.5 .7)" fill="#000" opacity=".45"/><path d="M10.600 6.800L15.600 3 17.400 14.300 20.600 17.400 7.400 20.300 12.400 14.900z" fill="#0a0ae6" stroke="#000" stroke-width="1" stroke-linejoin="round"/><path d="M2.400 7.100L6.800 3 14 12.400 9.600 15.600z" fill="#4a90e8" stroke="#0a1440" stroke-width=".9" stroke-linejoin="round"/><path d="M4 5.800l7.200 9.400M5.300 4.600l7.200 9.400" stroke="#b4d4fa" stroke-width=".7"/><path d="M9.600 15.600L14 12.400 13.600 16.600z" fill="#fff" stroke="#0a1440" stroke-width=".6"/><path d="M12.600 16l1.100.7.100-1.500z" fill="#000"/></svg>
<svg style="left:967px;top:65px" width="24" height="24" viewBox="0 0 24 24"><path d="M3.500 9.400L8.900 4.400 13 9.400 20 5" transform="translate(.5 .8)" fill="none" stroke="#000" stroke-opacity=".13" stroke-width="3.2" stroke-linejoin="round" stroke-linecap="round"/><path d="M3.500 9.400L8.900 4.400 13 9.400 20 5" fill="none" stroke="#929290" stroke-width="3.2" stroke-linejoin="round" stroke-linecap="round"/><path d="M3.500 9.400L8.900 4.400 13 9.400 20 5" fill="none" stroke="#f6f6f5" stroke-width="1.3000000000000003" stroke-linejoin="round" stroke-linecap="round"/><path d="M10.600 11.300h4.200L12.700 15z" fill="#8f8f8d"/><path d="M3.200 19.100C5 16.500 6.500 16 8 17S12 20.300 14.500 19.200 18.500 16.500 20 15.900" transform="translate(.5 .8)" fill="none" stroke="#000" stroke-opacity=".13" stroke-width="3.2" stroke-linejoin="round" stroke-linecap="round"/><path d="M3.200 19.100C5 16.500 6.500 16 8 17S12 20.300 14.500 19.200 18.500 16.500 20 15.900" fill="none" stroke="#929290" stroke-width="3.2" stroke-linejoin="round" stroke-linecap="round"/><path d="M3.200 19.100C5 16.500 6.500 16 8 17S12 20.300 14.500 19.200 18.500 16.500 20 15.900" fill="none" stroke="#f6f6f5" stroke-width="1.3000000000000003" stroke-linejoin="round" stroke-linecap="round"/></svg>
<svg style="left:998px;top:65px" width="24" height="24" viewBox="0 0 24 24"><path d="M10.300 4.800h3V7h2.300v3h-2.300v2.300h-3V10H8V7h2.300z" fill="#a5a5a3"/><path d="M2.500 18.200H21.400" stroke="#b3b3b1" stroke-width="2.300" stroke-linecap="round"/><path d="M3 17.900H21" stroke="#e6e6e4" stroke-width=".8"/><circle cx="11.800" cy="17.800" r="2.400" fill="#d9d9d7" stroke="#a3a3a1" stroke-width=".8"/></svg>
<svg style="left:1029px;top:65px" width="24" height="24" viewBox="0 0 24 24"><rect x="8" y="5.800" width="8.400" height="3" rx=".5" fill="#a5a5a3"/><path d="M2.600 16.500H21" stroke="#b3b3b1" stroke-width="2.300" stroke-linecap="round"/><path d="M3 16.200H20.600" stroke="#e6e6e4" stroke-width=".8"/><circle cx="12.200" cy="16.300" r="2.400" fill="#d9d9d7" stroke="#a3a3a1" stroke-width=".8"/></svg>
<svg style="left:1059px;top:65px" width="24" height="24" viewBox="0 0 24 24"><path d="M4.200 18L13.600 21.200 22 17.100 12.800 14.500z" fill="#fdfdfd" stroke="#3c3c3c" stroke-width="1.500" stroke-linejoin="round"/><path d="M3.600 8L11.700 2.800 21.700 6.800V13L13.600 16.800 3.600 14z" fill="#0d3fc0" stroke="#050f3c" stroke-width=".8" stroke-linejoin="round"/><path d="M3.600 8L11.700 2.800 21.700 6.800 13.600 10.600z" fill="#2f86f5"/><path d="M13.600 10.600L21.700 6.800V13L13.600 16.800z" fill="#0a3ab8"/><path d="M3.600 8L13.600 10.600V16.800L3.600 14z" fill="#1a5ce6"/><path d="M3.600 8L13.600 10.600 21.700 6.800M13.600 10.600V16.800" fill="none" stroke="#050f3c" stroke-width=".5"/></svg>
<svg style="left:1090px;top:65px" width="24" height="24" viewBox="0 0 24 24"><defs><linearGradient id="bl2" x1="0" y1="0" x2="1" y2="1"><stop offset="0" stop-color="#6aa6f7"/><stop offset=".55" stop-color="#2d6fe2"/><stop offset="1" stop-color="#1447c0"/></linearGradient></defs><path d="M3.500 7.100L9.400 3.400 15.400 7.100 9.400 10.600z" fill="none" stroke="#1414ff" stroke-width="1.200" stroke-linejoin="round"/><ellipse cx="17.300" cy="5.900" rx="5" ry="2.900" fill="none" stroke="#1414ff" stroke-width="1.200"/><path d="M3.500 17.400L9.400 13.800 15.400 17.400 9.400 21.200z" fill="none" stroke="#ff1414" stroke-width="1.200" stroke-linejoin="round"/><ellipse cx="17.300" cy="16.600" rx="5" ry="2.900" fill="none" stroke="#ff1414" stroke-width="1.200"/><path d="M8.500 8.800L11.400 12.300H9.800V16H7.200V12.300H5.600z" fill="url(#bl2)" stroke="#0b2a8a" stroke-width=".5"/><path d="M17.300 16.200L14.400 12.700H16V9H18.600V12.700H20.200z" fill="url(#bl2)" stroke="#0b2a8a" stroke-width=".5"/></svg>
<svg style="left:1121px;top:65px" width="24" height="24" viewBox="0 0 24 24"><defs><linearGradient id="bl" x1="0" y1="0" x2="1" y2="1"><stop offset="0" stop-color="#5b9cf5"/><stop offset=".5" stop-color="#1c5fe0"/><stop offset="1" stop-color="#0a36b8"/></linearGradient></defs><rect x="4.699999999999999" y="4.9" width="3.200" height="5.700" rx=".9" fill="url(#bl)" stroke="#0b2a8a" stroke-width=".7"/><rect x="4.699999999999999" y="13.65" width="3.200" height="5.700" rx=".9" fill="url(#bl)" stroke="#0b2a8a" stroke-width=".7"/><rect x="10.9" y="4.9" width="3.200" height="5.700" rx=".9" fill="url(#bl)" stroke="#0b2a8a" stroke-width=".7"/><rect x="10.9" y="13.65" width="3.200" height="5.700" rx=".9" fill="url(#bl)" stroke="#0b2a8a" stroke-width=".7"/><rect x="17.2" y="4.9" width="3.200" height="5.700" rx=".9" fill="url(#bl)" stroke="#0b2a8a" stroke-width=".7"/><rect x="17.2" y="13.65" width="3.200" height="5.700" rx=".9" fill="url(#bl)" stroke="#0b2a8a" stroke-width=".7"/></svg>
<svg style="left:1152px;top:65px" width="24" height="24" viewBox="0 0 24 24"><defs><linearGradient id="bl" x1="0" y1="0" x2="1" y2="1"><stop offset="0" stop-color="#5b9cf5"/><stop offset=".5" stop-color="#1c5fe0"/><stop offset="1" stop-color="#0a36b8"/></linearGradient></defs><path d="M7.500 18.500C14.500 17.500 10.500 7 19 7" fill="none" stroke="#111" stroke-width="1.300"/><rect x="4.600" y="14.500" width="3.800" height="6.200" rx=".6" fill="url(#bl)" stroke="#0b2a8a" stroke-width=".6"/><rect x="9.400" y="9.700" width="6.200" height="3.100" rx=".6" fill="url(#bl)" stroke="#0b2a8a" stroke-width=".6"/><rect x="18" y="3.500" width="3.800" height="6.200" rx=".6" fill="url(#bl)" stroke="#0b2a8a" stroke-width=".6"/></svg>
<svg style="left:1183px;top:65px" width="24" height="24" viewBox="0 0 24 24"><defs><linearGradient id="cl" x1="0" y1="0" x2="0" y2="1"><stop offset="0" stop-color="#a8caf2"/><stop offset="1" stop-color="#4c8be0"/></linearGradient></defs><path d="M6 10C6 4.500 9 2.300 13 2.300S20 4.500 20 10V12.500C22 14 22.800 16.500 21.500 18.500L18 22.300H8L4.500 18.500C3.200 16.500 4 14 6 12.500z" fill="url(#cl)" stroke="#1a1a1a" stroke-width=".9" stroke-linejoin="round"/><path d="M6.300 9.300C6.500 4.500 9.300 2.800 13 2.800S19.500 4.500 19.700 9.300z" fill="#fdfdfd"/><path d="M6 9.200H20V11.300H6z" fill="#161616"/><path d="M7.500 11.300h4l-1 1.700h-2.500zM14.500 11.300h4l-.5 1.700h-2.500z" fill="#161616"/><path d="M9 17.200Q13 13.800 17 17.200" fill="none" stroke="#161616" stroke-width="1.300"/><circle cx="9.500" cy="20" r=".9" fill="#161616"/><circle cx="16.500" cy="20" r=".9" fill="#161616"/><rect x="12" y="18.800" width="2" height="2.600" fill="#5a4a3a"/></svg>
<svg style="left:1214px;top:65px" width="24" height="24" viewBox="0 0 24 24"><defs><linearGradient id="bl" x1="0" y1="0" x2="1" y2="1"><stop offset="0" stop-color="#5b9cf5"/><stop offset=".5" stop-color="#1c5fe0"/><stop offset="1" stop-color="#0a36b8"/></linearGradient></defs><path d="M8 6.300H21.700V19.400H8z" fill="#d9d9d8" stroke="#bcbcba" stroke-width=".8"/><path d="M8.500 18.800L21 7v11.800z" fill="#c4c4c2"/><path d="M8.500 19L21 7" stroke="#fff" stroke-width=".8"/><circle cx="16.200" cy="13.500" r="2.600" fill="#eceaff" stroke="#8a86f0" stroke-width=".9"/><path d="M3.800 8.500H9.500V5.800L14.800 10.500 9.500 15.200V12.500H3.800z" fill="url(#bl)" stroke="#061a60" stroke-width=".8" stroke-linejoin="round"/></svg>
<div class="hd" style="left:1248px;top:74px"></div>
<div class="hd" style="left:1248px;top:77px"></div>
<div class="hd" style="left:1248px;top:80px"></div>
<div class="sbtn" style="left:1254.6px;top:67px;width:20.400px;height:21px"></div>
<svg style="left:1252.6px;top:65.2px" width="24" height="24" viewBox="0 0 24 24"><g transform="translate(2 2)"><defs><linearGradient id="lk" x1="0" y1="0" x2="1" y2="0"><stop offset="0" stop-color="#0f8a6c"/><stop offset=".2" stop-color="#8fe6d0"/><stop offset=".45" stop-color="#18a583"/><stop offset="1" stop-color="#0f8a6c"/></linearGradient></defs><path d="M7.300 9.800V7.800Q7.300 5 10.100 5T12.900 7.800V9.800" fill="none" stroke="#04382b" stroke-width="2.500"/><path d="M7.300 9.800V7.800Q7.300 5 10.100 5T12.900 7.800V9.800" fill="none" stroke="#22b08c" stroke-width="1.300"/><rect x="5.800" y="9.700" width="8.700" height="6.700" rx=".8" fill="url(#lk)" stroke="#04382b" stroke-width=".8"/><path d="M6.500 11.800h7.300M6.500 13.800h7.300" stroke="#0c6f58" stroke-width=".6" opacity=".7"/></g></svg>
<div class="sbtn" style="left:1277.0px;top:67px;width:20.400px;height:21px"></div>
<svg style="left:1275.0px;top:65.2px" width="24" height="24" viewBox="0 0 24 24"><g transform="translate(2 2)"><path d="M4.400 15.400L15.200 5.100" fill="none" stroke="#04382b" stroke-width="3.4000000000000004" stroke-linecap="butt" stroke-linejoin="round"/><path d="M4.400 15.400L15.200 5.100" fill="none" stroke="#16b58c" stroke-width="1.6" stroke-linecap="butt" stroke-linejoin="round"/><circle cx="9.800" cy="10.250" r="2.900" fill="#16b58c" stroke="#04382b" stroke-width=".9"/><path d="M4.400 15.400L15.200 5.100" stroke="#16b58c" stroke-width="1.500"/></g></svg>
<div class="sbtn" style="left:1299.5px;top:67px;width:20.400px;height:21px"></div>
<svg style="left:1297.5px;top:65.2px" width="24" height="24" viewBox="0 0 24 24"><g transform="translate(2 2)"><path d="M10.400 4.200V14.400M4 14.600H16.600" fill="none" stroke="#04382b" stroke-width="3.4000000000000004" stroke-linecap="butt" stroke-linejoin="round"/><path d="M10.400 4.200V14.400M4 14.600H16.600" fill="none" stroke="#16b58c" stroke-width="1.6" stroke-linecap="butt" stroke-linejoin="round"/></g></svg>
<div class="sbtn up" style="left:1321.9px;top:67px;width:20.400px;height:21px"></div>
<svg style="left:1319.9px;top:65.2px" width="24" height="24" viewBox="0 0 24 24"><g transform="translate(2 2)"><path d="M5.700 4.200h3.400v2h2.600v-2h3.400v2.200h2v3.300h-2v2.200h2v3.300h-2v2.100h-3.400v-2h-2.600v2H5.700v-2.100h-2v-3.300h2V9.700h-2V6.400h2z" fill="#16b58c" stroke="#04382b" stroke-width=".9" stroke-linejoin="round"/><rect x="9" y="9.200" width="2.800" height="2.800" fill="#fdfdfc" stroke="#04382b" stroke-width=".7"/></g></svg>
<div class="sbtn" style="left:1344.3px;top:67px;width:20.400px;height:21px"></div>
<svg style="left:1342.3px;top:65.2px" width="24" height="24" viewBox="0 0 24 24"><g transform="translate(2 2)"><path d="M4.800 5.200L15.400 15.600M15.400 5.200L4.800 15.600" fill="none" stroke="#04382b" stroke-width="3.8000000000000003" stroke-linecap="butt" stroke-linejoin="round"/><path d="M4.800 5.200L15.400 15.600M15.400 5.200L4.800 15.600" fill="none" stroke="#16b58c" stroke-width="2.0" stroke-linecap="butt" stroke-linejoin="round"/></g></svg>
<div class="sbtn" style="left:1366.8px;top:67px;width:20.400px;height:21px"></div>
<svg style="left:1364.8px;top:65.2px" width="24" height="24" viewBox="0 0 24 24"><g transform="translate(2 2)"><path d="M4.300 8.800L12.800 14.600M7.900 4.800L16.400 10.500" fill="none" stroke="#04382b" stroke-width="3.6" stroke-linecap="butt" stroke-linejoin="round"/><path d="M4.300 8.800L12.800 14.600M7.900 4.800L16.400 10.500" fill="none" stroke="#16b58c" stroke-width="1.8" stroke-linecap="butt" stroke-linejoin="round"/></g></svg>
<div class="sbtn" style="left:1389.2px;top:67px;width:20.400px;height:21px"></div>
<svg style="left:1387.2px;top:65.2px" width="24" height="24" viewBox="0 0 24 24"><g transform="translate(2 2)"><path d="M15.600 5.600L7 13.400" fill="none" stroke="#04382b" stroke-width="3.5" stroke-linecap="butt" stroke-linejoin="round"/><path d="M15.600 5.600L7 13.400" fill="none" stroke="#16b58c" stroke-width="1.7" stroke-linecap="butt" stroke-linejoin="round"/><circle cx="6.800" cy="13.700" r="2.800" fill="#16b58c" stroke="#04382b" stroke-width=".9"/></g></svg>
<div class="sbtn up" style="left:1411.6px;top:67px;width:20.400px;height:21px"></div>
<svg style="left:1409.6px;top:65.2px" width="24" height="24" viewBox="0 0 24 24"><g transform="translate(2 2)"><path d="M9.800 5.300L14.800 10.300 9.800 15.300 4.800 10.300z" fill="none" stroke="#04382b" stroke-width="3.200" stroke-linejoin="round"/><path d="M9.800 5.300L14.800 10.300 9.800 15.300 4.800 10.300z" fill="#fdfdfc" stroke="#16b58c" stroke-width="1.800" stroke-linejoin="round"/><circle cx="9.8" cy="4.8" r="1.800" fill="#16b58c" stroke="#04382b" stroke-width=".8"/><circle cx="15.3" cy="10.3" r="1.800" fill="#16b58c" stroke="#04382b" stroke-width=".8"/><circle cx="9.8" cy="15.8" r="1.800" fill="#16b58c" stroke="#04382b" stroke-width=".8"/><circle cx="4.3" cy="10.3" r="1.800" fill="#16b58c" stroke="#04382b" stroke-width=".8"/></g></svg>
<div class="sbtn up" style="left:1434.0px;top:67px;width:20.400px;height:21px"></div>
<svg style="left:1432.0px;top:65.2px" width="24" height="24" viewBox="0 0 24 24"><g transform="translate(2 2)"><circle cx="9.900" cy="10.300" r="5.600" fill="#16b58c" stroke="#04382b" stroke-width="1.500"/><circle cx="9.900" cy="10.300" r="2.900" fill="#d8efe8" stroke="#04382b" stroke-width=".9"/><circle cx="9.900" cy="10.300" r="1.300" fill="#16b58c"/></g></svg>
<div class="sbtn" style="left:1456.5px;top:67px;width:20.400px;height:21px"></div>
<svg style="left:1454.5px;top:65.2px" width="24" height="24" viewBox="0 0 24 24"><g transform="translate(2 2)"><circle cx="5.3" cy="10.300" r="1.800" fill="#16b58c" stroke="#04382b" stroke-width=".8"/><circle cx="10.1" cy="10.300" r="1.800" fill="#16b58c" stroke="#04382b" stroke-width=".8"/><circle cx="15.0" cy="10.300" r="1.800" fill="#16b58c" stroke="#04382b" stroke-width=".8"/></g></svg>
<div class="sbtn up" style="left:1478.9px;top:67px;width:20.400px;height:21px"></div>
<svg style="left:1476.9px;top:65.2px" width="24" height="24" viewBox="0 0 24 24"><g transform="translate(2 2)"><path d="M4.800 9.900L13.800 14.900" fill="none" stroke="#04382b" stroke-width="3.4000000000000004" stroke-linecap="butt" stroke-linejoin="round"/><path d="M4.800 9.900L13.800 14.900" fill="none" stroke="#16b58c" stroke-width="1.6" stroke-linecap="butt" stroke-linejoin="round"/><circle cx="12.800" cy="6.600" r="2" fill="#16b58c" stroke="#04382b" stroke-width=".8"/></g></svg>
<div class="sbtn up" style="left:1501.3px;top:67px;width:20.400px;height:21px"></div>
<svg style="left:1499.3px;top:65.2px" width="24" height="24" viewBox="0 0 24 24"><g transform="translate(2 2)"><path d="M10.100 6V14.600M5.800 10.300H14.400" fill="none" stroke="#04382b" stroke-width="3.3" stroke-linecap="round" stroke-linejoin="round"/><path d="M10.100 6V14.600M5.800 10.300H14.400" fill="none" stroke="#16b58c" stroke-width="1.5" stroke-linecap="round" stroke-linejoin="round"/></g></svg>
<div class="sbtn up" style="left:1523.8px;top:67px;width:20.400px;height:21px"></div>
<svg style="left:1521.8px;top:65.2px" width="24" height="24" viewBox="0 0 24 24"><g transform="translate(2 2)"><path d="M7.500 8.500h8v2h-1.300v-1h-2.200v5.700h1.500v1.200H8v-1.200h1.500V9.500H7.500z" fill="#16b58c" stroke="#04382b" stroke-width=".5"/><path d="M5.800 9v6.500M4.800 10h2M4.800 12h2M4.800 14h2M4.500 15.800h3" stroke="#04382b" stroke-width=".8"/><path d="M9.500 6.500h5.500M10 5v2.500M12.200 5v2.500M14.500 5v2.500" stroke="#04382b" stroke-width=".7"/></g></svg>
<div class="sbtn" style="left:1546.2px;top:67px;width:20.400px;height:21px"></div>
<svg style="left:1544.2px;top:65.2px" width="24" height="24" viewBox="0 0 24 24"><g transform="translate(2 2)"><rect x="4.300" y="4.800" width="11.400" height="11.200" rx=".6" fill="#16b58c" stroke="#04382b" stroke-width="1.100"/><circle cx="7.900" cy="11.900" r="1.300" fill="#12876b" stroke="#04382b" stroke-width=".7"/></g></svg>
<div class="t" style="left:4px;top:97px;letter-spacing:-.2px">Combo View</div>
<svg style="left:191px;top:100px" width="26" height="11" viewBox="0 0 26 11"><rect x=".8" y="1" width="9" height="9" rx="1.800" fill="#fafaf9" stroke="#8f8d88" stroke-width=".9"/><rect x="2.700" y="4.300" width="3.600" height="3.600" fill="none" stroke="#6b6a66" stroke-width=".8"/><path d="M4.500 4V2.800h3.600v3.600H6.600" fill="none" stroke="#6b6a66" stroke-width=".8"/><rect x="15.300" y="1" width="9" height="9" rx="1.800" fill="#fafaf9" stroke="#8f8d88" stroke-width=".9"/><path d="M17.600 3.300l4.400 4.400M22 3.300l-4.400 4.400" stroke="#3c3b37" stroke-width="1.500"/></svg>
<div class="abs" style="left:3px;top:141px;width:214.500px;height:744px;border:1px solid #c4c0ba;border-radius:0 3px 3px 3px;background:#f2f1f0"></div>
<div class="abs" style="left:4px;top:143px;width:212.500px;height:337.500px;border:1px solid #cdc9c3;border-radius:2px;background:#fff"></div>
<div class="abs" style="left:5px;top:144px;width:210.500px;height:21px;background:#f2f1f0"></div>
<div class="abs" style="left:5px;top:143.500px;width:125.500px;height:22px;background:linear-gradient(#fdfdfc,#f1f0ee);border:1px solid #d2cfca;border-left:none;border-radius:1px"></div>
<div class="abs" style="left:52px;top:119.500px;width:44px;height:22px;border:1px solid #c4c0ba;border-bottom:none;border-radius:4px 4px 0 0;background:linear-gradient(#f4f3f2,#dcdad6)"></div>
<div class="abs" style="left:3px;top:116.500px;width:50px;height:25.500px;border:1px solid #c4c0ba;border-bottom:none;border-radius:4px 4px 0 0;background:linear-gradient(#fbfbfa,#f3f2f1)"></div>
<div class="t" style="left:9px;top:120px">Model</div>
<div class="t" style="left:59px;top:121px;letter-spacing:-.4px">Tasks</div>
<div class="t" style="left:8px;top:146px">Labels &amp; Attributes</div>
<div class="t" style="left:7px;top:165px">Application</div>
<svg style="left:11.500px;top:186.800px" width="7" height="6" viewBox="0 0 7 6"><path d="M0.600 0.500h5.800L3.500 4.900z" fill="#77756f" stroke="#4a4945" stroke-width=".8" stroke-linejoin="round"/></svg>
<svg style="left:19px;top:178px" width="24" height="24" viewBox="0 0 24 24"><rect x="6.700" y="5.200" width="10.200" height="12.800" fill="#e4e4e4" stroke="#b9b9b9" stroke-width=".7"/><path d="M9 11Q9 8.500 12.500 8.500T16 11.500V15.500Q14 17.500 11 17 8.500 16.500 8.500 14z" fill="#3a55c8"/><path d="M10 11.500v4.500M12 11v5.500M14 11.500v4.500" stroke="#6f86e0" stroke-width=".7"/><path d="M9.500 10.500Q10 7 13 7T16.300 10.500Q14.500 9.500 13 9.700T9.500 10.500z" fill="#e01b1b"/><circle cx="16" cy="12" r="1.100" fill="#fff"/></svg>
<div class="t" style="left:43px;top:182px;font-weight:bold">test</div>
<svg style="left:35.5px;top:194px" width="24" height="24" viewBox="0 0 24 24"><rect x="6.500" y="10.500" width="7.900" height="6.800" fill="none" stroke="#2a2aff" stroke-width="1"/><circle cx="14.900" cy="9.500" r="4.100" fill="none" stroke="#2a2aff" stroke-width="1"/></svg>
<div class="t" style="left:60px;top:198px;letter-spacing:-.2px">Line</div>
<svg style="left:35.5px;top:210px" width="24" height="24" viewBox="0 0 24 24"><rect x="6.500" y="10.500" width="7.900" height="6.800" fill="none" stroke="#2a2aff" stroke-width="1"/><circle cx="14.900" cy="9.500" r="4.100" fill="none" stroke="#2a2aff" stroke-width="1"/></svg>
<div class="t" style="left:60px;top:214px;letter-spacing:-.3px">Line001</div>
<svg style="left:35.5px;top:227px" width="24" height="24" viewBox="0 0 24 24"><defs><radialGradient id="tp" cx=".35" cy=".3" r=".8"><stop offset="0" stop-color="#9a9aff"/><stop offset=".35" stop-color="#1a1aff"/><stop offset="1" stop-color="#0000d0"/></radialGradient></defs><circle cx="12.200" cy="11.600" r="3" fill="url(#tp)"/></svg>
<div class="t" style="left:60px;top:231px;letter-spacing:.15px">Point</div>
<svg style="left:35.5px;top:243px" width="24" height="24" viewBox="0 0 24 24"><rect x="6.500" y="10.500" width="7.900" height="6.800" fill="none" stroke="#2a2aff" stroke-width="1"/><circle cx="14.900" cy="9.500" r="4.100" fill="none" stroke="#2a2aff" stroke-width="1"/></svg>
<div class="t" style="left:60px;top:247px;letter-spacing:-.3px">Line002</div>
<svg style="left:35.5px;top:259px" width="24" height="24" viewBox="0 0 24 24"><rect x="6.500" y="10.500" width="7.900" height="6.800" fill="none" stroke="#2a2aff" stroke-width="1"/><circle cx="14.900" cy="9.500" r="4.100" fill="none" stroke="#2a2aff" stroke-width="1"/></svg>
<div class="t" style="left:60px;top:263px;letter-spacing:-.3px">Line003</div>
<svg style="left:35.5px;top:276px" width="24" height="24" viewBox="0 0 24 24"><rect x="6.500" y="10.500" width="7.900" height="6.800" fill="none" stroke="#2a2aff" stroke-width="1"/><circle cx="14.900" cy="9.500" r="4.100" fill="none" stroke="#2a2aff" stroke-width="1"/></svg>
<div class="t" style="left:60px;top:280px;letter-spacing:-.3px">Line004</div>
<svg style="left:35.5px;top:292px" width="24" height="24" viewBox="0 0 24 24"><rect x="6.500" y="10.500" width="7.900" height="6.800" fill="none" stroke="#2a2aff" stroke-width="1"/><circle cx="14.900" cy="9.500" r="4.100" fill="none" stroke="#2a2aff" stroke-width="1"/></svg>
<div class="t" style="left:60px;top:296px;letter-spacing:-.3px">Line005</div>
<svg style="left:35.5px;top:309px" width="24" height="24" viewBox="0 0 24 24"><rect x="6.500" y="10.500" width="7.900" height="6.800" fill="none" stroke="#2a2aff" stroke-width="1"/><circle cx="14.900" cy="9.500" r="4.100" fill="none" stroke="#2a2aff" stroke-width="1"/></svg>
<div class="t" style="left:60px;top:313px;letter-spacing:-.3px">Line006</div>
<svg style="left:35.5px;top:325px" width="24" height="24" viewBox="0 0 24 24"><rect x="6.500" y="10.500" width="7.900" height="6.800" fill="none" stroke="#2a2aff" stroke-width="1"/><circle cx="14.900" cy="9.500" r="4.100" fill="none" stroke="#2a2aff" stroke-width="1"/></svg>
<div class="t" style="left:60px;top:329px;letter-spacing:-.3px">Line007</div>
<svg style="left:35.5px;top:341px" width="24" height="24" viewBox="0 0 24 24"><rect x="6.500" y="10.500" width="7.900" height="6.800" fill="none" stroke="#2a2aff" stroke-width="1"/><circle cx="14.900" cy="9.500" r="4.100" fill="none" stroke="#2a2aff" stroke-width="1"/></svg>
<div class="t" style="left:60px;top:345px;letter-spacing:-.3px">Line008</div>
<svg style="left:35.5px;top:358px" width="24" height="24" viewBox="0 0 24 24"><rect x="6.500" y="10.500" width="7.900" height="6.800" fill="none" stroke="#2a2aff" stroke-width="1"/><circle cx="14.900" cy="9.500" r="4.100" fill="none" stroke="#2a2aff" stroke-width="1"/></svg>
<div class="t" style="left:60px;top:362px;letter-spacing:-.3px">Line009</div>
<svg style="left:35.5px;top:374px" width="24" height="24" viewBox="0 0 24 24"><defs><radialGradient id="tp" cx=".35" cy=".3" r=".8"><stop offset="0" stop-color="#9a9aff"/><stop offset=".35" stop-color="#1a1aff"/><stop offset="1" stop-color="#0000d0"/></radialGradient></defs><circle cx="12.200" cy="11.600" r="3" fill="url(#tp)"/></svg>
<div class="t" style="left:60px;top:378px;letter-spacing:0">Point001</div>
<svg style="left:35.5px;top:390px" width="24" height="24" viewBox="0 0 24 24"><rect x="6.500" y="10.500" width="7.900" height="6.800" fill="none" stroke="#2a2aff" stroke-width="1"/><circle cx="14.900" cy="9.500" r="4.100" fill="none" stroke="#2a2aff" stroke-width="1"/></svg>
<div class="t" style="left:60px;top:394px;letter-spacing:-.3px">Line010</div>
<svg style="left:35.5px;top:407px" width="24" height="24" viewBox="0 0 24 24"><rect x="6.500" y="10.500" width="7.900" height="6.800" fill="none" stroke="#2a2aff" stroke-width="1"/><circle cx="14.900" cy="9.500" r="4.100" fill="none" stroke="#2a2aff" stroke-width="1"/></svg>
<div class="t" style="left:60px;top:411px;letter-spacing:-.3px">Line011</div>
<svg style="left:35.5px;top:423px" width="24" height="24" viewBox="0 0 24 24"><rect x="6.500" y="10.500" width="7.900" height="6.800" fill="none" stroke="#2a2aff" stroke-width="1"/><circle cx="14.900" cy="9.500" r="4.100" fill="none" stroke="#2a2aff" stroke-width="1"/></svg>
<div class="t" style="left:60px;top:427px;letter-spacing:-.3px;font-weight:bold">Line012</div>
<div class="abs" style="left:108px;top:483px;width:1px;height:3px;background:#cfccc7"></div><div class="abs" style="left:110px;top:483px;width:1px;height:3px;background:#cfccc7"></div><div class="abs" style="left:112px;top:483px;width:1px;height:3px;background:#cfccc7"></div>
<div class="abs" style="left:4px;top:486px;width:212.500px;height:398px;border:1px solid #d2cfca;border-radius:3px;background:#f2f1f0"></div>
<div class="abs" style="left:5px;top:488px;width:210px;height:369px;border:1px solid #c4c0ba;border-radius:2px;background:#fff"></div>
<div class="abs" style="left:6px;top:489px;width:208px;height:21px;background:linear-gradient(#fcfcfb,#eceae7);border-bottom:1px solid #c9c5bf"></div>
<div class="abs" style="left:91px;top:489px;width:1px;height:21px;background:#cfccc7"></div>
<div class="t" style="left:10px;top:490px">Property</div>
<div class="t" style="left:96px;top:490px">Value</div>
<svg style="left:3px;top:858.300px" width="90" height="28" viewBox="0 0 90 28"><path d="M1.500 1.500L10 21.500Q11 23.500 13.500 23.500H33.500Q36 23.500 37 21.500L45.500 1.500" fill="#f2f1f0" stroke="#807e79" stroke-width="1.150"/><path d="M42.500 0L51 21.500Q52 23.500 54.500 23.500H73.500Q76 23.500 77 21.500L84 1" fill="#fff" stroke="#807e79" stroke-width="1.150"/></svg>
<div class="t" style="left:11px;top:861px">View</div>
<div class="t" style="left:53px;top:862px">Data</div>
<div class="abs" style="left:219px;top:487px;width:3px;height:1px;background:#cfccc7"></div><div class="abs" style="left:219px;top:489px;width:3px;height:1px;background:#cfccc7"></div><div class="abs" style="left:219px;top:491px;width:3px;height:1px;background:#cfccc7"></div>
<div class="abs" style="left:223px;top:95px;width:1376px;height:762px;background:linear-gradient(#333366,#9999b3)"></div>
<div class="abs" style="left:223px;top:94px;width:1376px;height:1px;background:#fdfdfc"></div><div class="abs" style="left:223px;top:95px;width:1376px;height:1px;background:#1c1c55"></div>
<svg style="left:223px;top:95px" width="1376" height="762" viewBox="223 95 1376 762"><path d="M488.5 181.0V857M496.5 181.0V857M503.5 181.0V857M511.5 181.0V857M518.5 181.0V857M526.5 181.0V857M533.5 181.0V857M541.5 181.0V857M548.5 181.0V857M563.5 181.0V857M571.5 181.0V857M578.5 181.0V857M586.5 181.0V857M593.5 181.0V857M601.5 181.0V857M608.5 181.0V857M616.5 181.0V857M623.5 181.0V857M638.5 181.0V857M646.5 181.0V857M653.5 181.0V857M661.5 181.0V857M668.5 181.0V857M676.5 181.0V857M683.5 181.0V857M691.5 181.0V857M698.5 181.0V857M713.5 181.0V857M721.5 181.0V857M728.5 181.0V857M736.5 181.0V857M743.5 181.0V857M751.5 181.0V857M758.5 181.0V857M766.5 181.0V857M773.5 181.0V857M788.5 181.0V857M796.5 181.0V857M803.5 181.0V857M811.5 181.0V857M818.5 181.0V857M826.5 181.0V857M833.5 181.0V857M841.5 181.0V857M848.5 181.0V857M863.5 181.0V857M871.5 181.0V857M878.5 181.0V857M886.5 181.0V857M893.5 181.0V857M901.5 181.0V857M908.5 181.0V857M916.5 181.0V857M923.5 181.0V857M938.5 181.0V857M946.5 181.0V857M953.5 181.0V857M961.5 181.0V857M968.5 181.0V857M976.5 181.0V857M983.5 181.0V857M991.5 181.0V857M998.5 181.0V857M1013.5 181.0V857M1021.5 181.0V857M1028.5 181.0V857M1036.5 181.0V857M1043.5 181.0V857M1051.5 181.0V857M1058.5 181.0V857M1066.5 181.0V857M1073.5 181.0V857M1088.5 181.0V857M1096.5 181.0V857M1103.5 181.0V857M1111.5 181.0V857M1118.5 181.0V857M1126.5 181.0V857M1133.5 181.0V857M1141.5 181.0V857M1148.5 181.0V857M1163.5 181.0V857M1171.5 181.0V857M1178.5 181.0V857M1186.5 181.0V857M1193.5 181.0V857M1201.5 181.0V857M1208.5 181.0V857M1216.5 181.0V857M1223.5 181.0V857M481.0 189.5H1232.0M481.0 196.5H1232.0M481.0 204.5H1232.0M481.0 211.5H1232.0M481.0 219.5H1232.0M481.0 226.5H1232.0M481.0 234.5H1232.0M481.0 241.5H1232.0M481.0 249.5H1232.0M481.0 264.5H1232.0M481.0 271.5H1232.0M481.0 279.5H1232.0M481.0 286.5H1232.0M481.0 294.5H1232.0M481.0 301.5H1232.0M481.0 309.5H1232.0M481.0 316.5H1232.0M481.0 324.5H1232.0M481.0 339.5H1232.0M481.0 346.5H1232.0M481.0 354.5H1232.0M481.0 361.5H1232.0M481.0 369.5H1232.0M481.0 376.5H1232.0M481.0 384.5H1232.0M481.0 391.5H1232.0M481.0 399.5H1232.0M481.0 414.5H1232.0M481.0 421.5H1232.0M481.0 429.5H1232.0M481.0 436.5H1232.0M481.0 444.5H1232.0M481.0 451.5H1232.0M481.0 459.5H1232.0M481.0 466.5H1232.0M481.0 474.5H1232.0M481.0 489.5H1232.0M481.0 496.5H1232.0M481.0 504.5H1232.0M481.0 511.5H1232.0M481.0 519.5H1232.0M481.0 526.5H1232.0M481.0 534.5H1232.0M481.0 541.5H1232.0M481.0 549.5H1232.0M481.0 564.5H1232.0M481.0 571.5H1232.0M481.0 579.5H1232.0M481.0 586.5H1232.0M481.0 594.5H1232.0M481.0 601.5H1232.0M481.0 609.5H1232.0M481.0 616.5H1232.0M481.0 624.5H1232.0M481.0 639.5H1232.0M481.0 646.5H1232.0M481.0 654.5H1232.0M481.0 661.5H1232.0M481.0 669.5H1232.0M481.0 676.5H1232.0M481.0 684.5H1232.0M481.0 691.5H1232.0M481.0 699.5H1232.0M481.0 714.5H1232.0M481.0 721.5H1232.0M481.0 729.5H1232.0M481.0 736.5H1232.0M481.0 744.5H1232.0M481.0 751.5H1232.0M481.0 759.5H1232.0M481.0 766.5H1232.0M481.0 774.5H1232.0M481.0 789.5H1232.0M481.0 796.5H1232.0M481.0 804.5H1232.0M481.0 811.5H1232.0M481.0 819.5H1232.0M481.0 826.5H1232.0M481.0 834.5H1232.0M481.0 841.5H1232.0M481.0 849.5H1232.0" stroke="#141432" stroke-opacity=".16" stroke-width="1" fill="none"/><path d="M481.5 181.0V857M556.5 181.0V857M631.5 181.0V857M706.5 181.0V857M781.5 181.0V857M931.5 181.0V857M1006.5 181.0V857M1081.5 181.0V857M1156.5 181.0V857M1231.5 181.0V857M481.0 181.5H1232.0M481.0 256.5H1232.0M481.0 331.5H1232.0M481.0 406.5H1232.0M481.0 481.5H1232.0M481.0 631.5H1232.0M481.0 706.5H1232.0M481.0 781.5H1232.0M481.0 856.5H1232.0" stroke="#141432" stroke-opacity=".36" stroke-width="1" fill="none"/><path d="M856.500 181.0V857M481.0 556.500H1232.0" stroke="#101030" stroke-opacity=".55" stroke-width="1" fill="none"/><path d="M808.5 210.7L585.1 629M918.3 215.6L1067.1 638.7M608.5 683.8L765.8 767.8M691.6 625.5L649 705.2M911.6 637.8L941.2 722.7M750.300 407.200L818.600 278.900L853 297.300L880.700 287L994.100 609.300L794.400 679.600L647.100 601L750.300 407.200L834.400 452.100L926.800 419.900" stroke="#000" stroke-width="1.500" fill="none" stroke-linejoin="miter"/><rect x="852.500" y="210.500" width="3.500" height="3.500" fill="#000"/><rect x="793" y="678" width="3.500" height="3.500" fill="#000"/><g font-family="Liberation Sans, sans-serif" font-size="8.500" fill="#0d0d0d" stroke="#0d0d0d" stroke-width=".25"><path d="M1561 817V798" stroke="#1f8c1f" stroke-width="1.900"/><path d="M1557.800 801.500L1561 792.500 1564.200 801.500z" fill="#1f8c1f" stroke="none"/><path d="M1563 818.500H1580" stroke="#8c1f1f" stroke-width="1.500"/><path d="M1578.500 815.300L1587.500 818.500 1578.500 821.700z" fill="#8c1f1f" stroke="none"/><path d="M1557.300 818.500L1561 814.800 1564.700 818.500 1561 822.200z" fill="#1f1f8c" stroke="none"/><text x="1563" y="792.500">Y</text><text x="1589" y="818.500">X</text><text x="1563.500" y="817.800">Z</text></g></svg>
<div class="abs" style="left:223px;top:857px;width:1376px;height:28px;background:#f2f1f0"></div>
<div class="abs" style="left:223px;top:857px;width:102.500px;height:27.500px;border:1px solid #cfccc7;border-top:none;border-radius:0 0 4px 4px;background:linear-gradient(#fdfdfd,#f7f6f5)"></div>
<svg style="left:224px;top:858px" width="24" height="24" viewBox="0 0 24 24"><path d="M5.600 6.700H12V9H8.300V11H11V13.200H8.300V16.600H5.600z" fill="#e8260a"/><path d="M5.600 6.700H7V16.600H5.600z" fill="#ff5a2a"/><path d="M18.06 12.60L18.06 13.80L16.49 14.01L16.19 14.75L17.15 16.00L16.30 16.85L15.05 15.89L14.31 16.19L14.10 17.76L12.90 17.76L12.69 16.19L11.95 15.89L10.70 16.85L9.85 16.00L10.81 14.75L10.51 14.01L8.94 13.80L8.94 12.60L10.51 12.39L10.81 11.65L9.85 10.40L10.70 9.55L11.95 10.51L12.69 10.21L12.90 8.64L14.10 8.64L14.31 10.21L15.05 10.51L16.30 9.55L17.15 10.40L16.19 11.65L16.49 12.39z" fill="#1c3cb8"/><circle cx="13.500" cy="13.200" r="1.500" fill="#fafafa"/></svg>
<div class="t" style="left:250px;top:863px">test : 1*</div>
<svg style="left:304px;top:865px" width="11" height="11" viewBox="0 0 11 11"><path d="M2.200 2.200l6.600 6.600M8.800 2.200l-6.600 6.600" stroke="#4f4e4a" stroke-width="3" stroke-linecap="round"/></svg>
<div class="abs" style="left:2px;top:885px;width:1597px;height:1px;background:#d9d6d2"></div>
<div class="t" style="left:1464px;top:890px;letter-spacing:-.3px">183.48 x 101.62 mm</div>
<svg style="left:1586px;top:897px" width="12" height="12" viewBox="0 0 12 12"><path d="M11 3L3 11M11 6L6 11M11 9L9 11" stroke="#dddad6" stroke-width="1"/></svg>
</body></html>
